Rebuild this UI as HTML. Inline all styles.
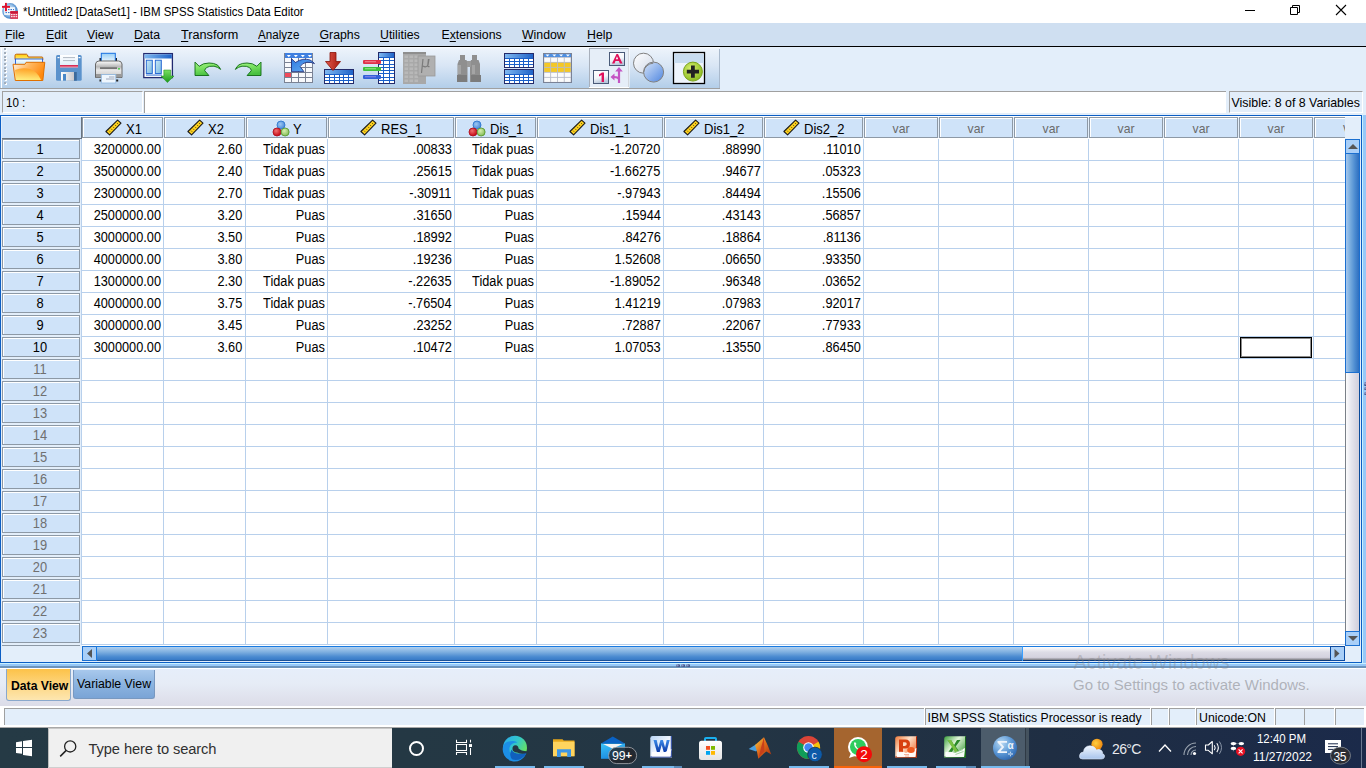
<!DOCTYPE html><html><head><meta charset="utf-8"><style>
html,body{margin:0;padding:0;width:1366px;height:768px;overflow:hidden;background:#fff;font-family:"Liberation Sans", sans-serif;position:relative}
u{text-decoration:underline;text-underline-offset:2px}
</style></head><body>
<div style="position:absolute;left:0px;top:0px;width:1366px;height:23px;background:#fff"></div>
<svg style="position:absolute;left:0;top:0" width="22" height="22" viewBox="0 0 22 22">
<defs><radialGradient id="appc" cx="0.45" cy="0.45" r="0.55"><stop offset="0" stop-color="#e8f4fc"/><stop offset="0.6" stop-color="#9cc4ea"/><stop offset="1" stop-color="#3a7cc4"/></radialGradient></defs>
<circle cx="10" cy="10.9" r="7.8" fill="url(#appc)"/>
<rect x="4.2" y="7.2" width="10.7" height="7.7" fill="#f4f8fc"/>
<path d="M5.5 9.6h8.5M5.5 12.6h8.5" stroke="#2a6ac8" stroke-width="1" stroke-dasharray="1.5 1"/>
<rect x="2" y="5.9" width="8" height="1.9" fill="#e0102a"/><rect x="5" y="2.9" width="1.9" height="8.3" fill="#e0102a"/>
<rect x="10.3" y="11.2" width="7.7" height="7.7" fill="#d83050"/><rect x="10.3" y="11.2" width="7.7" height="1.8" fill="#c81838"/>
<path d="M11 14.6h6.3M11 16.6h6.3" stroke="#fbe0e6" stroke-width="1.1" stroke-dasharray="1.6 0.7"/>
</svg>
<div style="position:absolute;left:23.2px;top:4.779999999999999px;font-size:12.4px;line-height:normal;color:#000;font-weight:normal;white-space:pre;transform:scaleX(0.924);transform-origin:0 0;">*Untitled2 [DataSet1] - IBM SPSS Statistics Data Editor</div>
<div style="position:absolute;left:1245px;top:10px;width:10px;height:1px;background:#000"></div>
<svg style="position:absolute;left:1289px;top:4px" width="12" height="12" viewBox="0 0 12 12">
<path d="M1.5 3.5h7v7h-7z" fill="none" stroke="#000" stroke-width="1"/>
<path d="M3.5 3.5v-2h7v7h-2" fill="none" stroke="#000" stroke-width="1"/></svg>
<svg style="position:absolute;left:1335px;top:4px" width="12" height="12" viewBox="0 0 12 12">
<path d="M1 1L11 11M11 1L1 11" stroke="#000" stroke-width="1.1"/></svg>
<div style="position:absolute;left:0px;top:23px;width:1366px;height:23px;background:#cfdff1"></div>
<div style="position:absolute;left:0px;top:46px;width:1366px;height:1px;background:#000"></div>
<div style="position:absolute;left:5px;top:27.869999999999997px;font-size:12.3px;line-height:normal;color:#000;font-weight:normal;white-space:pre;"><u>F</u>ile</div>
<div style="position:absolute;left:46px;top:27.869999999999997px;font-size:12.3px;line-height:normal;color:#000;font-weight:normal;white-space:pre;"><u>E</u>dit</div>
<div style="position:absolute;left:87px;top:27.869999999999997px;font-size:12.3px;line-height:normal;color:#000;font-weight:normal;white-space:pre;"><u>V</u>iew</div>
<div style="position:absolute;left:134px;top:27.869999999999997px;font-size:12.3px;line-height:normal;color:#000;font-weight:normal;white-space:pre;"><u>D</u>ata</div>
<div style="position:absolute;left:181px;top:27.869999999999997px;font-size:12.3px;line-height:normal;color:#000;font-weight:normal;white-space:pre;transform:scaleX(1.03);transform-origin:0 0;"><u>T</u>ransform</div>
<div style="position:absolute;left:258px;top:27.869999999999997px;font-size:12.3px;line-height:normal;color:#000;font-weight:normal;white-space:pre;transform:scaleX(0.945);transform-origin:0 0;"><u>A</u>nalyze</div>
<div style="position:absolute;left:319.5px;top:27.869999999999997px;font-size:12.3px;line-height:normal;color:#000;font-weight:normal;white-space:pre;"><u>G</u>raphs</div>
<div style="position:absolute;left:380px;top:27.869999999999997px;font-size:12.3px;line-height:normal;color:#000;font-weight:normal;white-space:pre;"><u>U</u>tilities</div>
<div style="position:absolute;left:441.5px;top:27.869999999999997px;font-size:12.3px;line-height:normal;color:#000;font-weight:normal;white-space:pre;">E<u>x</u>tensions</div>
<div style="position:absolute;left:522px;top:27.869999999999997px;font-size:12.3px;line-height:normal;color:#000;font-weight:normal;white-space:pre;"><u>W</u>indow</div>
<div style="position:absolute;left:587px;top:27.869999999999997px;font-size:12.3px;line-height:normal;color:#000;font-weight:normal;white-space:pre;"><u>H</u>elp</div>
<div style="position:absolute;left:0px;top:47px;width:1366px;height:42px;background:#e3eefa"></div>
<div style="position:absolute;left:0px;top:47px;width:720px;height:41px;background:linear-gradient(#fbfdff 0px,#ecf3fb 2px,#d9e6f5 45%,#b3cee9 100%)"></div>
<div style="position:absolute;left:719px;top:49px;width:1px;height:39px;background:#a9b9cc"></div>
<div style="position:absolute;left:0px;top:88px;width:720px;height:1px;background:#a0a0a0"></div>
<div style="position:absolute;left:1px;top:48px;width:1px;height:40px;background:#fff"></div>
<div style="position:absolute;left:5px;top:49px;width:2px;height:2px;background:#fff"></div>
<div style="position:absolute;left:4px;top:48px;width:2px;height:2px;background:#a2adba"></div>
<div style="position:absolute;left:5px;top:53px;width:2px;height:2px;background:#fff"></div>
<div style="position:absolute;left:4px;top:52px;width:2px;height:2px;background:#a2adba"></div>
<div style="position:absolute;left:5px;top:57px;width:2px;height:2px;background:#fff"></div>
<div style="position:absolute;left:4px;top:56px;width:2px;height:2px;background:#a2adba"></div>
<div style="position:absolute;left:5px;top:60px;width:2px;height:2px;background:#fff"></div>
<div style="position:absolute;left:4px;top:59px;width:2px;height:2px;background:#a2adba"></div>
<div style="position:absolute;left:5px;top:64px;width:2px;height:2px;background:#fff"></div>
<div style="position:absolute;left:4px;top:63px;width:2px;height:2px;background:#a2adba"></div>
<div style="position:absolute;left:5px;top:68px;width:2px;height:2px;background:#fff"></div>
<div style="position:absolute;left:4px;top:67px;width:2px;height:2px;background:#a2adba"></div>
<div style="position:absolute;left:5px;top:71px;width:2px;height:2px;background:#fff"></div>
<div style="position:absolute;left:4px;top:70px;width:2px;height:2px;background:#a2adba"></div>
<div style="position:absolute;left:5px;top:75px;width:2px;height:2px;background:#fff"></div>
<div style="position:absolute;left:4px;top:74px;width:2px;height:2px;background:#a2adba"></div>
<div style="position:absolute;left:5px;top:79px;width:2px;height:2px;background:#fff"></div>
<div style="position:absolute;left:4px;top:78px;width:2px;height:2px;background:#a2adba"></div>
<div style="position:absolute;left:5px;top:83px;width:2px;height:2px;background:#fff"></div>
<div style="position:absolute;left:4px;top:82px;width:2px;height:2px;background:#a2adba"></div>
<svg style="position:absolute;left:0;top:0" width="720" height="90" viewBox="0 0 720 90"><defs>
<linearGradient id="fold" x1="0" y1="0" x2="0" y2="1"><stop offset="0" stop-color="#ffd25a"/><stop offset="0.5" stop-color="#ffb13a"/><stop offset="1" stop-color="#ffe7a0"/></linearGradient>
<linearGradient id="hdrg" x1="0" y1="0" x2="1" y2="0"><stop offset="0" stop-color="#7fb8f0"/><stop offset="1" stop-color="#1f63c8"/></linearGradient>
<linearGradient id="grn" x1="0" y1="0" x2="0.3" y2="1"><stop offset="0" stop-color="#a8f88a"/><stop offset="0.5" stop-color="#78e060"/><stop offset="1" stop-color="#48c040"/></linearGradient>
<linearGradient id="prn" x1="0" y1="0" x2="0" y2="1"><stop offset="0" stop-color="#ffffff"/><stop offset="0.35" stop-color="#b8b8b8"/><stop offset="0.55" stop-color="#e8e8e8"/><stop offset="1" stop-color="#c8c8c8"/></linearGradient>
<linearGradient id="redar" x1="0" y1="0" x2="1" y2="0"><stop offset="0" stop-color="#e2574a"/><stop offset="1" stop-color="#a51a10"/></linearGradient>
<linearGradient id="circ2" x1="0" y1="0" x2="1" y2="1"><stop offset="0" stop-color="#d6e4f8"/><stop offset="1" stop-color="#4f86e0"/></linearGradient>
<linearGradient id="circ1" x1="0" y1="0" x2="1" y2="1"><stop offset="0" stop-color="#ffffff"/><stop offset="1" stop-color="#cfd8e8"/></linearGradient>
<linearGradient id="lblg" x1="0" y1="0" x2="0.3" y2="1"><stop offset="0" stop-color="#ffffff"/><stop offset="0.6" stop-color="#f4f6fa"/><stop offset="1" stop-color="#b8c8dc"/></linearGradient>
<linearGradient id="arrb" x1="0" y1="0" x2="1" y2="1"><stop offset="0" stop-color="#2f78e0"/><stop offset="1" stop-color="#6ab4f4"/></linearGradient>
<linearGradient id="foldt" x1="0" y1="0" x2="0" y2="1"><stop offset="0" stop-color="#ffd000"/><stop offset="1" stop-color="#ffe890"/></linearGradient>
<linearGradient id="paper" x1="0" y1="0" x2="0" y2="1"><stop offset="0" stop-color="#ffffff"/><stop offset="1" stop-color="#bfe6f8"/></linearGradient>
<linearGradient id="foldf" x1="0" y1="0" x2="1" y2="0.4"><stop offset="0" stop-color="#fff4e8"/><stop offset="0.5" stop-color="#ffb860"/><stop offset="1" stop-color="#ff8a10"/></linearGradient>
<linearGradient id="foldh" x1="0" y1="0" x2="0" y2="1"><stop offset="0" stop-color="#ff9a18"/><stop offset="1" stop-color="#fff888"/></linearGradient>
<linearGradient id="flab" x1="0" y1="0" x2="0" y2="1"><stop offset="0" stop-color="#ffffff"/><stop offset="1" stop-color="#e0eefa"/></linearGradient>
<linearGradient id="fred" x1="0" y1="0" x2="0" y2="1"><stop offset="0" stop-color="#d01040"/><stop offset="1" stop-color="#f8a0b0"/></linearGradient>
<linearGradient id="fshut" x1="0" y1="0" x2="1" y2="0"><stop offset="0" stop-color="#ffffff"/><stop offset="1" stop-color="#c8c8cc"/></linearGradient>
<linearGradient id="prpap" x1="0" y1="0" x2="0" y2="1"><stop offset="0" stop-color="#98cff6"/><stop offset="1" stop-color="#f4faff"/></linearGradient>
<linearGradient id="colg" x1="0" y1="0" x2="1" y2="1"><stop offset="0" stop-color="#c8e8f8"/><stop offset="1" stop-color="#7ab8e0"/></linearGradient>
<linearGradient id="grn2" x1="0" y1="0" x2="0" y2="1"><stop offset="0" stop-color="#78e060"/><stop offset="1" stop-color="#1a9a1a"/></linearGradient>
<radialGradient id="gball" cx="0.4" cy="0.35" r="0.7"><stop offset="0" stop-color="#d8f070"/><stop offset="1" stop-color="#86b81c"/></radialGradient>
</defs><path d="M15 59.5 V55.5 Q15 54.2 16.5 54.2 H26.5 Q27.5 54.2 28.2 57 H42 Q42.8 57 42.8 58 V60z" fill="url(#foldt)" stroke="#c0600a" stroke-width="1"/><rect x="15.5" y="59" width="27" height="6" fill="url(#paper)" stroke="#1a5ae0" stroke-width="0.9"/><path d="M13 64.3 H24.9 L26.1 62.3 H44.8 L42.8 80.5 H15.3 Z" fill="url(#foldf)" stroke="#e07000" stroke-width="1" stroke-linejoin="round"/><path d="M16 80 L15 70 Q22 67 30 69 Q38 72 41 80z" fill="url(#foldh)" opacity="0.85"/><path d="M57.5 55 H80.2 Q81.7 55 81.7 56.5 V79.2 Q81.7 80.7 80.2 80.7 H57.5 Q56 80.7 56 79.2 V56.5 Q56 55 57.5 55z" fill="#5b92cc"/><rect x="57.5" y="57" width="2" height="1.2" fill="#fff"/><rect x="78.5" y="57" width="2" height="1.2" fill="#fff"/><rect x="60" y="55" width="18" height="10" fill="url(#flab)"/><rect x="60" y="65" width="18" height="2.6" fill="url(#fred)"/><path d="M63 57.6 h12 M63 60.6 h12" stroke="#a8b0bc" stroke-width="0.9"/><rect x="61" y="72" width="13" height="8.7" fill="url(#fshut)"/><rect x="74" y="72" width="2.8" height="8.7" fill="#3c6a9c"/><rect x="63" y="74" width="3" height="6.7" fill="#4a88c8"/><rect x="99.5" y="58" width="2" height="3" fill="#222"/><rect x="115" y="58" width="2" height="3" fill="#222"/><rect x="101.3" y="53.3" width="14" height="9.5" fill="url(#prpap)" stroke="#1a70e0" stroke-width="1"/><path d="M95.5 64 Q96 61 99 61 H118.5 Q121.5 61 122 64 V77.5 H95.5z" fill="url(#prn)" stroke="#5a5a5a" stroke-width="0.9"/><rect x="100" y="67.3" width="17" height="1.6" fill="#6a6a6a"/><rect x="118" y="68.2" width="2" height="1.3" fill="#3ccc3c"/><rect x="96" y="74" width="25.5" height="3.4" fill="#9a9a9a"/><rect x="99.5" y="79.5" width="2.2" height="2" fill="#222"/><rect x="116" y="79.5" width="2.2" height="2" fill="#222"/><rect x="101.3" y="74.5" width="14.5" height="8.5" fill="#eef6fd" stroke="#90b8e0" stroke-width="0.8"/><path d="M109 77 h5.5 M106 79 h8.5" stroke="#8a96a8" stroke-width="0.8"/><rect x="143.8" y="53.6" width="28.6" height="24" fill="#fff" stroke="#222a70" stroke-width="1.3"/><rect x="144.5" y="54.3" width="27.3" height="4.2" fill="url(#hdrg)"/><rect x="146.3" y="60.2" width="6" height="13.3" fill="url(#colg)" stroke="#1a5fd0" stroke-width="0.9"/><rect x="155.3" y="60.2" width="6" height="13.3" fill="url(#colg)" stroke="#1a5fd0" stroke-width="0.9"/><rect x="146" y="74.6" width="16" height="0.9" fill="#1a5fd0"/><path d="M163.8 70 H170.7 V76 H174 L167.4 82.6 L161 76 H163.8z" fill="url(#grn2)" stroke="#1a8a1a" stroke-width="0.5"/><path d="M195 62.1 L199.2 66.3 Q203 63 209 63 Q214 63 217 64.8 Q219.5 66.5 220.6 69.4 Q218 67 214 66.2 Q209 65.8 206.5 67.6 Q205 69 204.7 70.7 L208.9 75.5 L195 75.5 Z" fill="url(#grn)" stroke="#0e6a12" stroke-width="0.9" stroke-linejoin="miter"/><path d="M 261 62.1 L 256.8 66.3 Q 253 63 247 63 Q 242 63 239 64.8 Q 236.5 66.5 235.4 69.4 Q 238 67 242 66.2 Q 247 65.8 249.5 67.6 Q 251 69 251.3 70.7 L 247.1 75.5 L 261 75.5 Z" fill="url(#grn)" stroke="#0e6a12" stroke-width="0.9" stroke-linejoin="miter"/><g shape-rendering="crispEdges"><rect x="284" y="53" width="29" height="30" fill="#7a8294"/><rect x="285" y="53" width="27" height="5" fill="#3f7fe0"/><rect x="285" y="58" width="6" height="4" fill="#f8f9fc"/><rect x="292" y="58" width="6" height="4" fill="#f8f9fc"/><rect x="299" y="58" width="6" height="4" fill="#f8f9fc"/><rect x="306" y="58" width="6" height="4" fill="#f8f9fc"/><rect x="285" y="63" width="6" height="4" fill="#f8f9fc"/><rect x="292" y="63" width="6" height="4" fill="#f8f9fc"/><rect x="299" y="63" width="6" height="4" fill="#f8f9fc"/><rect x="306" y="63" width="6" height="4" fill="#f8f9fc"/><rect x="285" y="68" width="6" height="4" fill="#f8f9fc"/><rect x="292" y="68" width="6" height="4" fill="#f8f9fc"/><rect x="299" y="68" width="6" height="4" fill="#f8f9fc"/><rect x="306" y="68" width="6" height="4" fill="#f8f9fc"/><rect x="285" y="73" width="6" height="4" fill="#f04a5a"/><rect x="292" y="73" width="6" height="4" fill="#f8f9fc"/><rect x="299" y="73" width="6" height="4" fill="#f8f9fc"/><rect x="306" y="73" width="6" height="4" fill="#f8f9fc"/><rect x="285" y="78" width="6" height="4" fill="#f8f9fc"/><rect x="292" y="78" width="6" height="4" fill="#f8f9fc"/><rect x="299" y="78" width="6" height="4" fill="#f8f9fc"/><rect x="306" y="78" width="6" height="4" fill="#f8f9fc"/></g><path d="M286.8 55 h4 l-2 2.2z" fill="#fff"/><path d="M293.8 55 h4 l-2 2.2z" fill="#fff"/><path d="M300.8 55 h4 l-2 2.2z" fill="#fff"/><path d="M307.8 55 h4 l-2 2.2z" fill="#fff"/><path d="M291.5 58.7 L295.5 62.4 Q303 57.5 310 60 Q313 61.5 314.5 63.6 Q311 62 307 62.2 Q302 63 300.2 66.6 L303.9 71.6 L291.5 71.6 Z" fill="url(#arrb)" stroke="#1a2a7a" stroke-width="0.8"/><g shape-rendering="crispEdges"><rect x="324" y="69" width="30" height="15" fill="#232a6a"/><rect x="325" y="70" width="28" height="13" fill="#1a5fc8"/><rect x="325" y="70" width="28" height="4" fill="url(#hdrg)"/><rect x="325.00" y="75.00" width="3.83" height="2.00" fill="#fff"/><rect x="329.83" y="75.00" width="3.83" height="2.00" fill="#fff"/><rect x="334.67" y="75.00" width="3.83" height="2.00" fill="#fff"/><rect x="339.50" y="75.00" width="3.83" height="2.00" fill="#fff"/><rect x="344.33" y="75.00" width="3.83" height="2.00" fill="#fff"/><rect x="349.17" y="75.00" width="3.83" height="2.00" fill="#fff"/><rect x="325.00" y="78.00" width="3.83" height="2.00" fill="#fff"/><rect x="329.83" y="78.00" width="3.83" height="2.00" fill="#fff"/><rect x="334.67" y="78.00" width="3.83" height="2.00" fill="#fff"/><rect x="339.50" y="78.00" width="3.83" height="2.00" fill="#fff"/><rect x="344.33" y="78.00" width="3.83" height="2.00" fill="#fff"/><rect x="349.17" y="78.00" width="3.83" height="2.00" fill="#fff"/><rect x="325.00" y="81.00" width="3.83" height="2.00" fill="#fff"/><rect x="329.83" y="81.00" width="3.83" height="2.00" fill="#fff"/><rect x="334.67" y="81.00" width="3.83" height="2.00" fill="#fff"/><rect x="339.50" y="81.00" width="3.83" height="2.00" fill="#fff"/><rect x="344.33" y="81.00" width="3.83" height="2.00" fill="#fff"/><rect x="349.17" y="81.00" width="3.83" height="2.00" fill="#fff"/></g><path d="M330 52.5 h6 v9 h4.5 l-7.5 9 l-7.5-9 h4.5z" fill="url(#redar)" stroke="#8a1208" stroke-width="0.8"/><g shape-rendering="crispEdges"><rect x="378" y="52" width="17" height="32" fill="#232a6a"/><rect x="379" y="53" width="15" height="30" fill="#1a5fc8"/><rect x="379" y="53" width="15" height="4" fill="url(#hdrg)"/><rect x="379.00" y="58.00" width="4.33" height="2.25" fill="#fff"/><rect x="384.33" y="58.00" width="4.33" height="2.25" fill="#fff"/><rect x="389.67" y="58.00" width="4.33" height="2.25" fill="#fff"/><rect x="379.00" y="61.25" width="4.33" height="2.25" fill="#fff"/><rect x="384.33" y="61.25" width="4.33" height="2.25" fill="#fff"/><rect x="389.67" y="61.25" width="4.33" height="2.25" fill="#fff"/><rect x="379.00" y="64.50" width="4.33" height="2.25" fill="#fff"/><rect x="384.33" y="64.50" width="4.33" height="2.25" fill="#fff"/><rect x="389.67" y="64.50" width="4.33" height="2.25" fill="#fff"/><rect x="379.00" y="67.75" width="4.33" height="2.25" fill="#fff"/><rect x="384.33" y="67.75" width="4.33" height="2.25" fill="#fff"/><rect x="389.67" y="67.75" width="4.33" height="2.25" fill="#fff"/><rect x="379.00" y="71.00" width="4.33" height="2.25" fill="#fff"/><rect x="384.33" y="71.00" width="4.33" height="2.25" fill="#fff"/><rect x="389.67" y="71.00" width="4.33" height="2.25" fill="#fff"/><rect x="379.00" y="74.25" width="4.33" height="2.25" fill="#fff"/><rect x="384.33" y="74.25" width="4.33" height="2.25" fill="#fff"/><rect x="389.67" y="74.25" width="4.33" height="2.25" fill="#fff"/><rect x="379.00" y="77.50" width="4.33" height="2.25" fill="#fff"/><rect x="384.33" y="77.50" width="4.33" height="2.25" fill="#fff"/><rect x="389.67" y="77.50" width="4.33" height="2.25" fill="#fff"/><rect x="379.00" y="80.75" width="4.33" height="2.25" fill="#fff"/><rect x="384.33" y="80.75" width="4.33" height="2.25" fill="#fff"/><rect x="389.67" y="80.75" width="4.33" height="2.25" fill="#fff"/></g><rect x="363" y="60" width="18" height="4" rx="1" fill="#e0304a"/><rect x="365" y="61.4" width="11" height="0.8" fill="#f8a0a8"/><rect x="363" y="67" width="18" height="4" rx="1" fill="#3cc03c"/><rect x="365" y="68.4" width="11" height="0.8" fill="#b0f0a0"/><rect x="363" y="75" width="18" height="4" rx="1" fill="#3060d8"/><rect x="365" y="76.4" width="11" height="0.8" fill="#a090f0"/><rect x="403" y="52" width="23" height="32" fill="#a8a8a8"/><rect x="403" y="52" width="23" height="2" fill="#8e8e8e"/><rect x="404.5" y="55.5" width="3.6" height="2.6" fill="#b8b8b8"/><rect x="409.5" y="55.5" width="3.6" height="2.6" fill="#b8b8b8"/><rect x="414.5" y="55.5" width="3.6" height="2.6" fill="#b8b8b8"/><rect x="404.5" y="59.5" width="3.6" height="2.6" fill="#b8b8b8"/><rect x="409.5" y="59.5" width="3.6" height="2.6" fill="#b8b8b8"/><rect x="414.5" y="59.5" width="3.6" height="2.6" fill="#b8b8b8"/><rect x="404.5" y="63.5" width="3.6" height="2.6" fill="#b8b8b8"/><rect x="409.5" y="63.5" width="3.6" height="2.6" fill="#b8b8b8"/><rect x="414.5" y="63.5" width="3.6" height="2.6" fill="#b8b8b8"/><rect x="404.5" y="67.5" width="3.6" height="2.6" fill="#b8b8b8"/><rect x="409.5" y="67.5" width="3.6" height="2.6" fill="#b8b8b8"/><rect x="414.5" y="67.5" width="3.6" height="2.6" fill="#b8b8b8"/><rect x="404.5" y="71.5" width="3.6" height="2.6" fill="#b8b8b8"/><rect x="409.5" y="71.5" width="3.6" height="2.6" fill="#b8b8b8"/><rect x="414.5" y="71.5" width="3.6" height="2.6" fill="#b8b8b8"/><rect x="404.5" y="75.5" width="3.6" height="2.6" fill="#b8b8b8"/><rect x="409.5" y="75.5" width="3.6" height="2.6" fill="#b8b8b8"/><rect x="414.5" y="75.5" width="3.6" height="2.6" fill="#b8b8b8"/><rect x="404.5" y="79.5" width="3.6" height="2.6" fill="#b8b8b8"/><rect x="409.5" y="79.5" width="3.6" height="2.6" fill="#b8b8b8"/><rect x="414.5" y="79.5" width="3.6" height="2.6" fill="#b8b8b8"/><rect x="418" y="56" width="17" height="20" fill="#b0b0b0" stroke="#9a9a9a" stroke-width="0.8"/><path d="M423 59 l-1.5 14 M423 66 q3 2 5 -1 l1-6 M428.5 59 l-0.8 7 q0.5 1 1.8 0.5" fill="none" stroke="#7a7a7a" stroke-width="1.2"/><path d="M460 55 h5 v5 h1.5 l1 3 v19 h-10 v-18 l1.5-4 h1z" fill="#8f8f8f"/><path d="M472 55 h5 v5 h1.5 l1.5 4 v18 h-10 v-19 l1-3 h1z" fill="#8f8f8f"/><rect x="467" y="61" width="4" height="6" fill="#9a9a9a"/><rect x="457" y="75" width="10" height="7" fill="#7c7c7c"/><rect x="471" y="75" width="10" height="7" fill="#7c7c7c"/><rect x="458" y="65" width="3" height="9" fill="#a4a4a4"/><rect x="472" y="65" width="3" height="9" fill="#a4a4a4"/><g shape-rendering="crispEdges"><rect x="504" y="53" width="30" height="15" fill="#232a6a"/><rect x="505" y="54" width="28" height="13" fill="#1a5fc8"/><rect x="505" y="54" width="28" height="4" fill="url(#hdrg)"/><rect x="505.00" y="59.00" width="3.83" height="2.00" fill="#fff"/><rect x="509.83" y="59.00" width="3.83" height="2.00" fill="#fff"/><rect x="514.67" y="59.00" width="3.83" height="2.00" fill="#fff"/><rect x="519.50" y="59.00" width="3.83" height="2.00" fill="#fff"/><rect x="524.33" y="59.00" width="3.83" height="2.00" fill="#fff"/><rect x="529.17" y="59.00" width="3.83" height="2.00" fill="#fff"/><rect x="505.00" y="62.00" width="3.83" height="2.00" fill="#fff"/><rect x="509.83" y="62.00" width="3.83" height="2.00" fill="#fff"/><rect x="514.67" y="62.00" width="3.83" height="2.00" fill="#fff"/><rect x="519.50" y="62.00" width="3.83" height="2.00" fill="#fff"/><rect x="524.33" y="62.00" width="3.83" height="2.00" fill="#fff"/><rect x="529.17" y="62.00" width="3.83" height="2.00" fill="#fff"/><rect x="505.00" y="65.00" width="3.83" height="2.00" fill="#fff"/><rect x="509.83" y="65.00" width="3.83" height="2.00" fill="#fff"/><rect x="514.67" y="65.00" width="3.83" height="2.00" fill="#fff"/><rect x="519.50" y="65.00" width="3.83" height="2.00" fill="#fff"/><rect x="524.33" y="65.00" width="3.83" height="2.00" fill="#fff"/><rect x="529.17" y="65.00" width="3.83" height="2.00" fill="#fff"/></g><g shape-rendering="crispEdges"><rect x="504" y="69" width="30" height="15" fill="#232a6a"/><rect x="505" y="70" width="28" height="13" fill="#1a5fc8"/><rect x="505" y="70" width="28" height="4" fill="url(#hdrg)"/><rect x="505.00" y="75.00" width="3.83" height="2.00" fill="#fff"/><rect x="509.83" y="75.00" width="3.83" height="2.00" fill="#fff"/><rect x="514.67" y="75.00" width="3.83" height="2.00" fill="#fff"/><rect x="519.50" y="75.00" width="3.83" height="2.00" fill="#fff"/><rect x="524.33" y="75.00" width="3.83" height="2.00" fill="#fff"/><rect x="529.17" y="75.00" width="3.83" height="2.00" fill="#fff"/><rect x="505.00" y="78.00" width="3.83" height="2.00" fill="#fff"/><rect x="509.83" y="78.00" width="3.83" height="2.00" fill="#fff"/><rect x="514.67" y="78.00" width="3.83" height="2.00" fill="#fff"/><rect x="519.50" y="78.00" width="3.83" height="2.00" fill="#fff"/><rect x="524.33" y="78.00" width="3.83" height="2.00" fill="#fff"/><rect x="529.17" y="78.00" width="3.83" height="2.00" fill="#fff"/><rect x="505.00" y="81.00" width="3.83" height="2.00" fill="#fff"/><rect x="509.83" y="81.00" width="3.83" height="2.00" fill="#fff"/><rect x="514.67" y="81.00" width="3.83" height="2.00" fill="#fff"/><rect x="519.50" y="81.00" width="3.83" height="2.00" fill="#fff"/><rect x="524.33" y="81.00" width="3.83" height="2.00" fill="#fff"/><rect x="529.17" y="81.00" width="3.83" height="2.00" fill="#fff"/></g><rect x="543.5" y="53.5" width="28" height="29" fill="#b8bcc8" stroke="#7a8296" stroke-width="1"/><rect x="544" y="54" width="27" height="3" fill="#4f8fe0"/><rect x="544.30" y="57.80" width="5.9" height="4.1" fill="#fbfbfb"/><rect x="551.10" y="57.80" width="5.9" height="4.1" fill="#fbfbfb"/><rect x="557.90" y="57.80" width="5.9" height="4.1" fill="#fbfbfb"/><rect x="564.70" y="57.80" width="5.9" height="4.1" fill="#fbfbfb"/><rect x="544.30" y="62.80" width="5.9" height="4.1" fill="#f5c824"/><rect x="551.10" y="62.80" width="5.9" height="4.1" fill="#f5c824"/><rect x="557.90" y="62.80" width="5.9" height="4.1" fill="#f5c824"/><rect x="564.70" y="62.80" width="5.9" height="4.1" fill="#f5c824"/><rect x="544.30" y="67.80" width="5.9" height="4.1" fill="#f5c824"/><rect x="551.10" y="67.80" width="5.9" height="4.1" fill="#f5c824"/><rect x="557.90" y="67.80" width="5.9" height="4.1" fill="#f5c824"/><rect x="564.70" y="67.80" width="5.9" height="4.1" fill="#f5c824"/><rect x="544.30" y="72.80" width="5.9" height="4.1" fill="#fbfbfb"/><rect x="551.10" y="72.80" width="5.9" height="4.1" fill="#fbfbfb"/><rect x="557.90" y="72.80" width="5.9" height="4.1" fill="#fbfbfb"/><rect x="564.70" y="72.80" width="5.9" height="4.1" fill="#fbfbfb"/><rect x="544.30" y="77.80" width="5.9" height="4.1" fill="#fbfbfb"/><rect x="551.10" y="77.80" width="5.9" height="4.1" fill="#fbfbfb"/><rect x="557.90" y="77.80" width="5.9" height="4.1" fill="#fbfbfb"/><rect x="564.70" y="77.80" width="5.9" height="4.1" fill="#fbfbfb"/><path d="M545.50 54.6 h4 l-2 2z" fill="#fff"/><path d="M552.30 54.6 h4 l-2 2z" fill="#fff"/><path d="M559.10 54.6 h4 l-2 2z" fill="#fff"/><path d="M565.90 54.6 h4 l-2 2z" fill="#fff"/><rect x="589.5" y="48.5" width="39" height="39" fill="#e6eef8" stroke="#a8b0bc" stroke-width="1"/><path d="M629 48.5 v39 h-40" fill="none" stroke="#fff" stroke-width="1"/><rect x="609.5" y="52.5" width="15" height="13" fill="url(#lblg)" stroke="#4a5a78" stroke-width="1"/><path d="M612 63.5 l4.5-9.5 h1.5 l4.5 9.5 h-2.6 l-1-2.4 h-3.4 l-1 2.4z M615.8 59.3 h2.4 l-1.2-3z" fill="#e0105a" fill-rule="evenodd"/><rect x="593.5" y="70.5" width="15" height="13" fill="url(#lblg)" stroke="#4a5a78" stroke-width="1"/><path d="M599 74.5 l3-2 h2 v9.5 h-2.4 v-7 l-2.6 1.4z" fill="#e0105a"/><path d="M619 83 V71 M619 79.5 Q618.5 77 614 77" fill="none" stroke="#c455c4" stroke-width="2.2"/><path d="M615.2 71.5 L619 67 L622.8 71.5z M614.5 73.5 L610.5 77 L614.5 80.5z" fill="#c455c4"/><circle cx="643.5" cy="63.2" r="10" fill="url(#circ1)" stroke="#808080" stroke-width="1"/><circle cx="653.6" cy="72.1" r="10" fill="url(#circ2)" stroke="#808080" stroke-width="1"/><path d="M643.7 72.1 a10 10 0 0 1 9.6-8.9" fill="none" stroke="#808080" stroke-width="1"/><rect x="673.5" y="52.5" width="31" height="31" fill="#eef4fc" stroke="#000" stroke-width="1.3"/><rect x="674.2" y="54" width="29.6" height="9" fill="#c8dcf0"/><circle cx="692.9" cy="71.6" r="9.5" fill="url(#gball)" stroke="#7aa21a" stroke-width="1"/><path d="M691 65.5 h3.8 v4.2 h4.2 v3.8 h-4.2 v4.2 h-3.8 v-4.2 h-4.2 v-3.8 h4.2z" fill="#222"/></svg>
<div style="position:absolute;left:0px;top:89px;width:1366px;height:26px;background:#e3eefa"></div>
<div style="position:absolute;left:2px;top:91px;width:141px;height:22px;background:#e3eefa;border-top:1px solid #a0a0a0;border-left:1px solid #a0a0a0;border-bottom:1px solid #fff;border-right:1px solid #fff;box-sizing:border-box"></div>
<div style="position:absolute;left:5.5px;top:95.87px;font-size:12.3px;line-height:normal;color:#000;font-weight:normal;white-space:pre;transform:scaleX(0.94);transform-origin:0 0;">10 :</div>
<div style="position:absolute;left:144px;top:91px;width:1082px;height:22px;background:#fff;border-top:1px solid #a0a0a0;border-left:1px solid #a0a0a0;box-sizing:border-box"></div>
<div style="position:absolute;left:1229px;top:91px;width:134px;height:22px;background:#e3eefa;border-top:1px solid #a0a0a0;border-left:1px solid #a0a0a0;border-bottom:1px solid #fff;border-right:1px solid #fff;box-sizing:border-box"></div>
<div style="position:absolute;left:1231.5px;top:95.78px;font-size:12.4px;line-height:normal;color:#000;font-weight:normal;white-space:pre;">Visible: 8 of 8 Variables</div>
<div style="position:absolute;left:0px;top:115px;width:1362px;height:548px;background:#e3eefa;border:1px solid #0c5ec4;box-sizing:border-box"></div>
<div style="position:absolute;left:1px;top:116px;width:1360px;height:1px;background:#fff"></div>
<div style="position:absolute;left:82px;top:138px;width:1263px;height:507px;background:#fff"></div>
<div style="position:absolute;left:163px;top:139px;width:1px;height:506px;background:#b8d0ec"></div>
<div style="position:absolute;left:245px;top:139px;width:1px;height:506px;background:#b8d0ec"></div>
<div style="position:absolute;left:327px;top:139px;width:1px;height:506px;background:#b8d0ec"></div>
<div style="position:absolute;left:454px;top:139px;width:1px;height:506px;background:#b8d0ec"></div>
<div style="position:absolute;left:536px;top:139px;width:1px;height:506px;background:#b8d0ec"></div>
<div style="position:absolute;left:663px;top:139px;width:1px;height:506px;background:#b8d0ec"></div>
<div style="position:absolute;left:763px;top:139px;width:1px;height:506px;background:#b8d0ec"></div>
<div style="position:absolute;left:863px;top:139px;width:1px;height:506px;background:#b8d0ec"></div>
<div style="position:absolute;left:938px;top:139px;width:1px;height:506px;background:#b8d0ec"></div>
<div style="position:absolute;left:1013px;top:139px;width:1px;height:506px;background:#b8d0ec"></div>
<div style="position:absolute;left:1088px;top:139px;width:1px;height:506px;background:#b8d0ec"></div>
<div style="position:absolute;left:1163px;top:139px;width:1px;height:506px;background:#b8d0ec"></div>
<div style="position:absolute;left:1238px;top:139px;width:1px;height:506px;background:#b8d0ec"></div>
<div style="position:absolute;left:1313px;top:139px;width:1px;height:506px;background:#b8d0ec"></div>
<div style="position:absolute;left:82px;top:160px;width:1263px;height:1px;background:#b8d0ec"></div>
<div style="position:absolute;left:82px;top:182px;width:1263px;height:1px;background:#b8d0ec"></div>
<div style="position:absolute;left:82px;top:204px;width:1263px;height:1px;background:#b8d0ec"></div>
<div style="position:absolute;left:82px;top:226px;width:1263px;height:1px;background:#b8d0ec"></div>
<div style="position:absolute;left:82px;top:248px;width:1263px;height:1px;background:#b8d0ec"></div>
<div style="position:absolute;left:82px;top:270px;width:1263px;height:1px;background:#b8d0ec"></div>
<div style="position:absolute;left:82px;top:292px;width:1263px;height:1px;background:#b8d0ec"></div>
<div style="position:absolute;left:82px;top:314px;width:1263px;height:1px;background:#b8d0ec"></div>
<div style="position:absolute;left:82px;top:336px;width:1263px;height:1px;background:#b8d0ec"></div>
<div style="position:absolute;left:82px;top:358px;width:1263px;height:1px;background:#b8d0ec"></div>
<div style="position:absolute;left:82px;top:380px;width:1263px;height:1px;background:#b8d0ec"></div>
<div style="position:absolute;left:82px;top:402px;width:1263px;height:1px;background:#b8d0ec"></div>
<div style="position:absolute;left:82px;top:424px;width:1263px;height:1px;background:#b8d0ec"></div>
<div style="position:absolute;left:82px;top:446px;width:1263px;height:1px;background:#b8d0ec"></div>
<div style="position:absolute;left:82px;top:468px;width:1263px;height:1px;background:#b8d0ec"></div>
<div style="position:absolute;left:82px;top:490px;width:1263px;height:1px;background:#b8d0ec"></div>
<div style="position:absolute;left:82px;top:512px;width:1263px;height:1px;background:#b8d0ec"></div>
<div style="position:absolute;left:82px;top:534px;width:1263px;height:1px;background:#b8d0ec"></div>
<div style="position:absolute;left:82px;top:556px;width:1263px;height:1px;background:#b8d0ec"></div>
<div style="position:absolute;left:82px;top:578px;width:1263px;height:1px;background:#b8d0ec"></div>
<div style="position:absolute;left:82px;top:600px;width:1263px;height:1px;background:#b8d0ec"></div>
<div style="position:absolute;left:82px;top:622px;width:1263px;height:1px;background:#b8d0ec"></div>
<div style="position:absolute;left:82px;top:644px;width:1263px;height:1px;background:#b8d0ec"></div>
<div style="position:absolute;left:81px;top:139px;width:1px;height:506px;background:#b8d0ec"></div>
<div style="position:absolute;left:2px;top:117px;width:80px;height:22px;background:#cfe3f9;border-right:1px solid #6a7480;border-bottom:1px solid #6a7480;box-sizing:border-box"></div>
<div style="position:absolute;left:82px;top:117px;width:81px;height:21px;background:#cfe3f9;border:1px solid #8d99a6;box-sizing:border-box;box-shadow:inset 1px 1px 0 #fff"></div>
<div style="position:absolute;left:164px;top:117px;width:81px;height:21px;background:#cfe3f9;border:1px solid #8d99a6;box-sizing:border-box;box-shadow:inset 1px 1px 0 #fff"></div>
<div style="position:absolute;left:246px;top:117px;width:81px;height:21px;background:#cfe3f9;border:1px solid #8d99a6;box-sizing:border-box;box-shadow:inset 1px 1px 0 #fff"></div>
<div style="position:absolute;left:328px;top:117px;width:126px;height:21px;background:#cfe3f9;border:1px solid #8d99a6;box-sizing:border-box;box-shadow:inset 1px 1px 0 #fff"></div>
<div style="position:absolute;left:455px;top:117px;width:81px;height:21px;background:#cfe3f9;border:1px solid #8d99a6;box-sizing:border-box;box-shadow:inset 1px 1px 0 #fff"></div>
<div style="position:absolute;left:537px;top:117px;width:126px;height:21px;background:#cfe3f9;border:1px solid #8d99a6;box-sizing:border-box;box-shadow:inset 1px 1px 0 #fff"></div>
<div style="position:absolute;left:664px;top:117px;width:99px;height:21px;background:#cfe3f9;border:1px solid #8d99a6;box-sizing:border-box;box-shadow:inset 1px 1px 0 #fff"></div>
<div style="position:absolute;left:764px;top:117px;width:99px;height:21px;background:#cfe3f9;border:1px solid #8d99a6;box-sizing:border-box;box-shadow:inset 1px 1px 0 #fff"></div>
<div style="position:absolute;left:864px;top:117px;width:74px;height:21px;background:#cfe3f9;border:1px solid #8d99a6;box-sizing:border-box;box-shadow:inset 1px 1px 0 #fff"></div>
<div style="position:absolute;left:939px;top:117px;width:74px;height:21px;background:#cfe3f9;border:1px solid #8d99a6;box-sizing:border-box;box-shadow:inset 1px 1px 0 #fff"></div>
<div style="position:absolute;left:1014px;top:117px;width:74px;height:21px;background:#cfe3f9;border:1px solid #8d99a6;box-sizing:border-box;box-shadow:inset 1px 1px 0 #fff"></div>
<div style="position:absolute;left:1089px;top:117px;width:74px;height:21px;background:#cfe3f9;border:1px solid #8d99a6;box-sizing:border-box;box-shadow:inset 1px 1px 0 #fff"></div>
<div style="position:absolute;left:1164px;top:117px;width:74px;height:21px;background:#cfe3f9;border:1px solid #8d99a6;box-sizing:border-box;box-shadow:inset 1px 1px 0 #fff"></div>
<div style="position:absolute;left:1239px;top:117px;width:74px;height:21px;background:#cfe3f9;border:1px solid #8d99a6;box-sizing:border-box;box-shadow:inset 1px 1px 0 #fff"></div>
<div style="position:absolute;left:1314px;top:117px;width:31px;height:21px;background:#cfe3f9;border-top:1px solid #8d99a6;border-left:1px solid #8d99a6;border-bottom:1px solid #8d99a6;box-sizing:border-box;box-shadow:inset 1px 1px 0 #fff"></div>
<svg style="position:absolute;left:105px;top:119px" width="18" height="17" viewBox="0 0 18 17">
<path d="M0.9 12.5 L12.6 1.1 L16 4.2 L4.6 15.8 Z" fill="#ffd21e" stroke="#1a1a1a" stroke-width="1.1" stroke-linejoin="round"/>
<path d="M4 11.6 l1.2 1.2 M6 9.7 l1.2 1.2 M8 7.8 l1.2 1.2 M10 5.9 l1.2 1.2 M12 4 l1.2 1.2" stroke="#6a5a10" stroke-width="0.9"/>
</svg>
<div style="position:absolute;left:125.5px;top:121.33px;font-size:14px;line-height:normal;color:#000;font-weight:normal;white-space:pre;transform:scaleX(0.93);transform-origin:0 0;">X1</div>
<svg style="position:absolute;left:187px;top:119px" width="18" height="17" viewBox="0 0 18 17">
<path d="M0.9 12.5 L12.6 1.1 L16 4.2 L4.6 15.8 Z" fill="#ffd21e" stroke="#1a1a1a" stroke-width="1.1" stroke-linejoin="round"/>
<path d="M4 11.6 l1.2 1.2 M6 9.7 l1.2 1.2 M8 7.8 l1.2 1.2 M10 5.9 l1.2 1.2 M12 4 l1.2 1.2" stroke="#6a5a10" stroke-width="0.9"/>
</svg>
<div style="position:absolute;left:207.5px;top:121.33px;font-size:14px;line-height:normal;color:#000;font-weight:normal;white-space:pre;transform:scaleX(0.93);transform-origin:0 0;">X2</div>
<svg style="position:absolute;left:272px;top:120px" width="18" height="18" viewBox="0 0 18 18">
<defs><radialGradient id="bb272" cx="0.4" cy="0.4" r="0.6"><stop offset="0" stop-color="#9cc8f4"/><stop offset="1" stop-color="#4a8ad8"/></radialGradient>
<radialGradient id="br272" cx="0.4" cy="0.35" r="0.6"><stop offset="0" stop-color="#f07070"/><stop offset="1" stop-color="#c8101a"/></radialGradient>
<radialGradient id="bg272" cx="0.4" cy="0.35" r="0.6"><stop offset="0" stop-color="#d8f0b0"/><stop offset="1" stop-color="#8cc060"/></radialGradient></defs>
<circle cx="9" cy="5" r="4" fill="url(#bb272)" stroke="#2f78d0" stroke-width="0.9"/>
<circle cx="5" cy="12" r="4" fill="url(#br272)" stroke="#b01020" stroke-width="0.9"/>
<circle cx="13.1" cy="12" r="4" fill="url(#bg272)" stroke="#5a9a30" stroke-width="0.9"/>
</svg>
<div style="position:absolute;left:292.5px;top:121.33px;font-size:14px;line-height:normal;color:#000;font-weight:normal;white-space:pre;transform:scaleX(0.93);transform-origin:0 0;">Y</div>
<svg style="position:absolute;left:360px;top:119px" width="18" height="17" viewBox="0 0 18 17">
<path d="M0.9 12.5 L12.6 1.1 L16 4.2 L4.6 15.8 Z" fill="#ffd21e" stroke="#1a1a1a" stroke-width="1.1" stroke-linejoin="round"/>
<path d="M4 11.6 l1.2 1.2 M6 9.7 l1.2 1.2 M8 7.8 l1.2 1.2 M10 5.9 l1.2 1.2 M12 4 l1.2 1.2" stroke="#6a5a10" stroke-width="0.9"/>
</svg>
<div style="position:absolute;left:381px;top:121.33px;font-size:14px;line-height:normal;color:#000;font-weight:normal;white-space:pre;transform:scaleX(0.93);transform-origin:0 0;">RES_1</div>
<svg style="position:absolute;left:468px;top:120px" width="18" height="18" viewBox="0 0 18 18">
<defs><radialGradient id="bb468" cx="0.4" cy="0.4" r="0.6"><stop offset="0" stop-color="#9cc8f4"/><stop offset="1" stop-color="#4a8ad8"/></radialGradient>
<radialGradient id="br468" cx="0.4" cy="0.35" r="0.6"><stop offset="0" stop-color="#f07070"/><stop offset="1" stop-color="#c8101a"/></radialGradient>
<radialGradient id="bg468" cx="0.4" cy="0.35" r="0.6"><stop offset="0" stop-color="#d8f0b0"/><stop offset="1" stop-color="#8cc060"/></radialGradient></defs>
<circle cx="9" cy="5" r="4" fill="url(#bb468)" stroke="#2f78d0" stroke-width="0.9"/>
<circle cx="5" cy="12" r="4" fill="url(#br468)" stroke="#b01020" stroke-width="0.9"/>
<circle cx="13.1" cy="12" r="4" fill="url(#bg468)" stroke="#5a9a30" stroke-width="0.9"/>
</svg>
<div style="position:absolute;left:489.5px;top:121.33px;font-size:14px;line-height:normal;color:#000;font-weight:normal;white-space:pre;transform:scaleX(0.93);transform-origin:0 0;">Dis_1</div>
<svg style="position:absolute;left:569px;top:119px" width="18" height="17" viewBox="0 0 18 17">
<path d="M0.9 12.5 L12.6 1.1 L16 4.2 L4.6 15.8 Z" fill="#ffd21e" stroke="#1a1a1a" stroke-width="1.1" stroke-linejoin="round"/>
<path d="M4 11.6 l1.2 1.2 M6 9.7 l1.2 1.2 M8 7.8 l1.2 1.2 M10 5.9 l1.2 1.2 M12 4 l1.2 1.2" stroke="#6a5a10" stroke-width="0.9"/>
</svg>
<div style="position:absolute;left:589.5px;top:121.33px;font-size:14px;line-height:normal;color:#000;font-weight:normal;white-space:pre;transform:scaleX(0.93);transform-origin:0 0;">Dis1_1</div>
<svg style="position:absolute;left:683px;top:119px" width="18" height="17" viewBox="0 0 18 17">
<path d="M0.9 12.5 L12.6 1.1 L16 4.2 L4.6 15.8 Z" fill="#ffd21e" stroke="#1a1a1a" stroke-width="1.1" stroke-linejoin="round"/>
<path d="M4 11.6 l1.2 1.2 M6 9.7 l1.2 1.2 M8 7.8 l1.2 1.2 M10 5.9 l1.2 1.2 M12 4 l1.2 1.2" stroke="#6a5a10" stroke-width="0.9"/>
</svg>
<div style="position:absolute;left:703.5px;top:121.33px;font-size:14px;line-height:normal;color:#000;font-weight:normal;white-space:pre;transform:scaleX(0.93);transform-origin:0 0;">Dis1_2</div>
<svg style="position:absolute;left:783px;top:119px" width="18" height="17" viewBox="0 0 18 17">
<path d="M0.9 12.5 L12.6 1.1 L16 4.2 L4.6 15.8 Z" fill="#ffd21e" stroke="#1a1a1a" stroke-width="1.1" stroke-linejoin="round"/>
<path d="M4 11.6 l1.2 1.2 M6 9.7 l1.2 1.2 M8 7.8 l1.2 1.2 M10 5.9 l1.2 1.2 M12 4 l1.2 1.2" stroke="#6a5a10" stroke-width="0.9"/>
</svg>
<div style="position:absolute;left:803.5px;top:121.33px;font-size:14px;line-height:normal;color:#000;font-weight:normal;white-space:pre;transform:scaleX(0.93);transform-origin:0 0;">Dis2_2</div>
<div style="position:absolute;left:701.0px;width:400px;top:121.96000000000001px;font-size:12.2px;line-height:normal;color:#6a6a6a;font-weight:normal;white-space:pre;text-align:center;">var</div>
<div style="position:absolute;left:776.0px;width:400px;top:121.96000000000001px;font-size:12.2px;line-height:normal;color:#6a6a6a;font-weight:normal;white-space:pre;text-align:center;">var</div>
<div style="position:absolute;left:851.0px;width:400px;top:121.96000000000001px;font-size:12.2px;line-height:normal;color:#6a6a6a;font-weight:normal;white-space:pre;text-align:center;">var</div>
<div style="position:absolute;left:926.0px;width:400px;top:121.96000000000001px;font-size:12.2px;line-height:normal;color:#6a6a6a;font-weight:normal;white-space:pre;text-align:center;">var</div>
<div style="position:absolute;left:1001.0px;width:400px;top:121.96000000000001px;font-size:12.2px;line-height:normal;color:#6a6a6a;font-weight:normal;white-space:pre;text-align:center;">var</div>
<div style="position:absolute;left:1076.0px;width:400px;top:121.96000000000001px;font-size:12.2px;line-height:normal;color:#6a6a6a;font-weight:normal;white-space:pre;text-align:center;">var</div>
<div style="position:absolute;left:1314px;top:117px;width:31px;height:21px;overflow:hidden"><div style="position:absolute;left:0px;width:75px;top:4.2px;font-size:12.2px;color:#6a6a6a;text-align:center">var</div></div>
<div style="position:absolute;left:2px;top:139px;width:78px;height:20px;background:#cfe3f9;border:1px solid #8d99a6;box-sizing:border-box;box-shadow:inset 1px 1px 0 #fff"></div>
<div style="position:absolute;left:-160.5px;width:400px;top:141.33px;font-size:14px;line-height:normal;color:#000;font-weight:normal;white-space:pre;text-align:center;transform:scaleX(0.92);transform-origin:50% 0;">1</div>
<div style="position:absolute;left:2px;top:161px;width:78px;height:20px;background:#cfe3f9;border:1px solid #8d99a6;box-sizing:border-box;box-shadow:inset 1px 1px 0 #fff"></div>
<div style="position:absolute;left:-160.5px;width:400px;top:163.33px;font-size:14px;line-height:normal;color:#000;font-weight:normal;white-space:pre;text-align:center;transform:scaleX(0.92);transform-origin:50% 0;">2</div>
<div style="position:absolute;left:2px;top:183px;width:78px;height:20px;background:#cfe3f9;border:1px solid #8d99a6;box-sizing:border-box;box-shadow:inset 1px 1px 0 #fff"></div>
<div style="position:absolute;left:-160.5px;width:400px;top:185.33px;font-size:14px;line-height:normal;color:#000;font-weight:normal;white-space:pre;text-align:center;transform:scaleX(0.92);transform-origin:50% 0;">3</div>
<div style="position:absolute;left:2px;top:205px;width:78px;height:20px;background:#cfe3f9;border:1px solid #8d99a6;box-sizing:border-box;box-shadow:inset 1px 1px 0 #fff"></div>
<div style="position:absolute;left:-160.5px;width:400px;top:207.33px;font-size:14px;line-height:normal;color:#000;font-weight:normal;white-space:pre;text-align:center;transform:scaleX(0.92);transform-origin:50% 0;">4</div>
<div style="position:absolute;left:2px;top:227px;width:78px;height:20px;background:#cfe3f9;border:1px solid #8d99a6;box-sizing:border-box;box-shadow:inset 1px 1px 0 #fff"></div>
<div style="position:absolute;left:-160.5px;width:400px;top:229.33px;font-size:14px;line-height:normal;color:#000;font-weight:normal;white-space:pre;text-align:center;transform:scaleX(0.92);transform-origin:50% 0;">5</div>
<div style="position:absolute;left:2px;top:249px;width:78px;height:20px;background:#cfe3f9;border:1px solid #8d99a6;box-sizing:border-box;box-shadow:inset 1px 1px 0 #fff"></div>
<div style="position:absolute;left:-160.5px;width:400px;top:251.33px;font-size:14px;line-height:normal;color:#000;font-weight:normal;white-space:pre;text-align:center;transform:scaleX(0.92);transform-origin:50% 0;">6</div>
<div style="position:absolute;left:2px;top:271px;width:78px;height:20px;background:#cfe3f9;border:1px solid #8d99a6;box-sizing:border-box;box-shadow:inset 1px 1px 0 #fff"></div>
<div style="position:absolute;left:-160.5px;width:400px;top:273.33px;font-size:14px;line-height:normal;color:#000;font-weight:normal;white-space:pre;text-align:center;transform:scaleX(0.92);transform-origin:50% 0;">7</div>
<div style="position:absolute;left:2px;top:293px;width:78px;height:20px;background:#cfe3f9;border:1px solid #8d99a6;box-sizing:border-box;box-shadow:inset 1px 1px 0 #fff"></div>
<div style="position:absolute;left:-160.5px;width:400px;top:295.33px;font-size:14px;line-height:normal;color:#000;font-weight:normal;white-space:pre;text-align:center;transform:scaleX(0.92);transform-origin:50% 0;">8</div>
<div style="position:absolute;left:2px;top:315px;width:78px;height:20px;background:#cfe3f9;border:1px solid #8d99a6;box-sizing:border-box;box-shadow:inset 1px 1px 0 #fff"></div>
<div style="position:absolute;left:-160.5px;width:400px;top:317.33px;font-size:14px;line-height:normal;color:#000;font-weight:normal;white-space:pre;text-align:center;transform:scaleX(0.92);transform-origin:50% 0;">9</div>
<div style="position:absolute;left:2px;top:337px;width:78px;height:20px;background:#cfe3f9;border:1px solid #8d99a6;box-sizing:border-box;box-shadow:inset 1px 1px 0 #fff"></div>
<div style="position:absolute;left:-160.5px;width:400px;top:339.33px;font-size:14px;line-height:normal;color:#000;font-weight:normal;white-space:pre;text-align:center;transform:scaleX(0.92);transform-origin:50% 0;">10</div>
<div style="position:absolute;left:2px;top:359px;width:78px;height:20px;background:#cfe3f9;border:1px solid #8d99a6;box-sizing:border-box;box-shadow:inset 1px 1px 0 #fff"></div>
<div style="position:absolute;left:-160.5px;width:400px;top:361.33px;font-size:14px;line-height:normal;color:#707070;font-weight:normal;white-space:pre;text-align:center;transform:scaleX(0.92);transform-origin:50% 0;">11</div>
<div style="position:absolute;left:2px;top:381px;width:78px;height:20px;background:#cfe3f9;border:1px solid #8d99a6;box-sizing:border-box;box-shadow:inset 1px 1px 0 #fff"></div>
<div style="position:absolute;left:-160.5px;width:400px;top:383.33px;font-size:14px;line-height:normal;color:#707070;font-weight:normal;white-space:pre;text-align:center;transform:scaleX(0.92);transform-origin:50% 0;">12</div>
<div style="position:absolute;left:2px;top:403px;width:78px;height:20px;background:#cfe3f9;border:1px solid #8d99a6;box-sizing:border-box;box-shadow:inset 1px 1px 0 #fff"></div>
<div style="position:absolute;left:-160.5px;width:400px;top:405.33px;font-size:14px;line-height:normal;color:#707070;font-weight:normal;white-space:pre;text-align:center;transform:scaleX(0.92);transform-origin:50% 0;">13</div>
<div style="position:absolute;left:2px;top:425px;width:78px;height:20px;background:#cfe3f9;border:1px solid #8d99a6;box-sizing:border-box;box-shadow:inset 1px 1px 0 #fff"></div>
<div style="position:absolute;left:-160.5px;width:400px;top:427.33px;font-size:14px;line-height:normal;color:#707070;font-weight:normal;white-space:pre;text-align:center;transform:scaleX(0.92);transform-origin:50% 0;">14</div>
<div style="position:absolute;left:2px;top:447px;width:78px;height:20px;background:#cfe3f9;border:1px solid #8d99a6;box-sizing:border-box;box-shadow:inset 1px 1px 0 #fff"></div>
<div style="position:absolute;left:-160.5px;width:400px;top:449.33px;font-size:14px;line-height:normal;color:#707070;font-weight:normal;white-space:pre;text-align:center;transform:scaleX(0.92);transform-origin:50% 0;">15</div>
<div style="position:absolute;left:2px;top:469px;width:78px;height:20px;background:#cfe3f9;border:1px solid #8d99a6;box-sizing:border-box;box-shadow:inset 1px 1px 0 #fff"></div>
<div style="position:absolute;left:-160.5px;width:400px;top:471.33px;font-size:14px;line-height:normal;color:#707070;font-weight:normal;white-space:pre;text-align:center;transform:scaleX(0.92);transform-origin:50% 0;">16</div>
<div style="position:absolute;left:2px;top:491px;width:78px;height:20px;background:#cfe3f9;border:1px solid #8d99a6;box-sizing:border-box;box-shadow:inset 1px 1px 0 #fff"></div>
<div style="position:absolute;left:-160.5px;width:400px;top:493.33px;font-size:14px;line-height:normal;color:#707070;font-weight:normal;white-space:pre;text-align:center;transform:scaleX(0.92);transform-origin:50% 0;">17</div>
<div style="position:absolute;left:2px;top:513px;width:78px;height:20px;background:#cfe3f9;border:1px solid #8d99a6;box-sizing:border-box;box-shadow:inset 1px 1px 0 #fff"></div>
<div style="position:absolute;left:-160.5px;width:400px;top:515.33px;font-size:14px;line-height:normal;color:#707070;font-weight:normal;white-space:pre;text-align:center;transform:scaleX(0.92);transform-origin:50% 0;">18</div>
<div style="position:absolute;left:2px;top:535px;width:78px;height:20px;background:#cfe3f9;border:1px solid #8d99a6;box-sizing:border-box;box-shadow:inset 1px 1px 0 #fff"></div>
<div style="position:absolute;left:-160.5px;width:400px;top:537.33px;font-size:14px;line-height:normal;color:#707070;font-weight:normal;white-space:pre;text-align:center;transform:scaleX(0.92);transform-origin:50% 0;">19</div>
<div style="position:absolute;left:2px;top:557px;width:78px;height:20px;background:#cfe3f9;border:1px solid #8d99a6;box-sizing:border-box;box-shadow:inset 1px 1px 0 #fff"></div>
<div style="position:absolute;left:-160.5px;width:400px;top:559.33px;font-size:14px;line-height:normal;color:#707070;font-weight:normal;white-space:pre;text-align:center;transform:scaleX(0.92);transform-origin:50% 0;">20</div>
<div style="position:absolute;left:2px;top:579px;width:78px;height:20px;background:#cfe3f9;border:1px solid #8d99a6;box-sizing:border-box;box-shadow:inset 1px 1px 0 #fff"></div>
<div style="position:absolute;left:-160.5px;width:400px;top:581.33px;font-size:14px;line-height:normal;color:#707070;font-weight:normal;white-space:pre;text-align:center;transform:scaleX(0.92);transform-origin:50% 0;">21</div>
<div style="position:absolute;left:2px;top:601px;width:78px;height:20px;background:#cfe3f9;border:1px solid #8d99a6;box-sizing:border-box;box-shadow:inset 1px 1px 0 #fff"></div>
<div style="position:absolute;left:-160.5px;width:400px;top:603.33px;font-size:14px;line-height:normal;color:#707070;font-weight:normal;white-space:pre;text-align:center;transform:scaleX(0.92);transform-origin:50% 0;">22</div>
<div style="position:absolute;left:2px;top:623px;width:78px;height:20px;background:#cfe3f9;border:1px solid #8d99a6;box-sizing:border-box;box-shadow:inset 1px 1px 0 #fff"></div>
<div style="position:absolute;left:-160.5px;width:400px;top:625.33px;font-size:14px;line-height:normal;color:#707070;font-weight:normal;white-space:pre;text-align:center;transform:scaleX(0.92);transform-origin:50% 0;">23</div>
<div style="position:absolute;left:2px;top:645px;width:78px;height:1px;background:#8d99a6"></div>
<div style="position:absolute;right:1205.5px;top:141.33px;font-size:14px;line-height:normal;color:#000;font-weight:normal;white-space:pre;text-align:right;transform:scaleX(0.91);transform-origin:100% 0;">3200000.00</div>
<div style="position:absolute;right:1123.5px;top:141.33px;font-size:14px;line-height:normal;color:#000;font-weight:normal;white-space:pre;text-align:right;transform:scaleX(0.91);transform-origin:100% 0;">2.60</div>
<div style="position:absolute;right:1041.5px;top:141.33px;font-size:14px;line-height:normal;color:#000;font-weight:normal;white-space:pre;text-align:right;transform:scaleX(0.91);transform-origin:100% 0;">Tidak puas</div>
<div style="position:absolute;right:914.5px;top:141.33px;font-size:14px;line-height:normal;color:#000;font-weight:normal;white-space:pre;text-align:right;transform:scaleX(0.91);transform-origin:100% 0;">.00833</div>
<div style="position:absolute;right:832.5px;top:141.33px;font-size:14px;line-height:normal;color:#000;font-weight:normal;white-space:pre;text-align:right;transform:scaleX(0.91);transform-origin:100% 0;">Tidak puas</div>
<div style="position:absolute;right:705.5px;top:141.33px;font-size:14px;line-height:normal;color:#000;font-weight:normal;white-space:pre;text-align:right;transform:scaleX(0.91);transform-origin:100% 0;">-1.20720</div>
<div style="position:absolute;right:605.5px;top:141.33px;font-size:14px;line-height:normal;color:#000;font-weight:normal;white-space:pre;text-align:right;transform:scaleX(0.91);transform-origin:100% 0;">.88990</div>
<div style="position:absolute;right:505.5px;top:141.33px;font-size:14px;line-height:normal;color:#000;font-weight:normal;white-space:pre;text-align:right;transform:scaleX(0.91);transform-origin:100% 0;">.11010</div>
<div style="position:absolute;right:1205.5px;top:163.33px;font-size:14px;line-height:normal;color:#000;font-weight:normal;white-space:pre;text-align:right;transform:scaleX(0.91);transform-origin:100% 0;">3500000.00</div>
<div style="position:absolute;right:1123.5px;top:163.33px;font-size:14px;line-height:normal;color:#000;font-weight:normal;white-space:pre;text-align:right;transform:scaleX(0.91);transform-origin:100% 0;">2.40</div>
<div style="position:absolute;right:1041.5px;top:163.33px;font-size:14px;line-height:normal;color:#000;font-weight:normal;white-space:pre;text-align:right;transform:scaleX(0.91);transform-origin:100% 0;">Tidak puas</div>
<div style="position:absolute;right:914.5px;top:163.33px;font-size:14px;line-height:normal;color:#000;font-weight:normal;white-space:pre;text-align:right;transform:scaleX(0.91);transform-origin:100% 0;">.25615</div>
<div style="position:absolute;right:832.5px;top:163.33px;font-size:14px;line-height:normal;color:#000;font-weight:normal;white-space:pre;text-align:right;transform:scaleX(0.91);transform-origin:100% 0;">Tidak puas</div>
<div style="position:absolute;right:705.5px;top:163.33px;font-size:14px;line-height:normal;color:#000;font-weight:normal;white-space:pre;text-align:right;transform:scaleX(0.91);transform-origin:100% 0;">-1.66275</div>
<div style="position:absolute;right:605.5px;top:163.33px;font-size:14px;line-height:normal;color:#000;font-weight:normal;white-space:pre;text-align:right;transform:scaleX(0.91);transform-origin:100% 0;">.94677</div>
<div style="position:absolute;right:505.5px;top:163.33px;font-size:14px;line-height:normal;color:#000;font-weight:normal;white-space:pre;text-align:right;transform:scaleX(0.91);transform-origin:100% 0;">.05323</div>
<div style="position:absolute;right:1205.5px;top:185.33px;font-size:14px;line-height:normal;color:#000;font-weight:normal;white-space:pre;text-align:right;transform:scaleX(0.91);transform-origin:100% 0;">2300000.00</div>
<div style="position:absolute;right:1123.5px;top:185.33px;font-size:14px;line-height:normal;color:#000;font-weight:normal;white-space:pre;text-align:right;transform:scaleX(0.91);transform-origin:100% 0;">2.70</div>
<div style="position:absolute;right:1041.5px;top:185.33px;font-size:14px;line-height:normal;color:#000;font-weight:normal;white-space:pre;text-align:right;transform:scaleX(0.91);transform-origin:100% 0;">Tidak puas</div>
<div style="position:absolute;right:914.5px;top:185.33px;font-size:14px;line-height:normal;color:#000;font-weight:normal;white-space:pre;text-align:right;transform:scaleX(0.91);transform-origin:100% 0;">-.30911</div>
<div style="position:absolute;right:832.5px;top:185.33px;font-size:14px;line-height:normal;color:#000;font-weight:normal;white-space:pre;text-align:right;transform:scaleX(0.91);transform-origin:100% 0;">Tidak puas</div>
<div style="position:absolute;right:705.5px;top:185.33px;font-size:14px;line-height:normal;color:#000;font-weight:normal;white-space:pre;text-align:right;transform:scaleX(0.91);transform-origin:100% 0;">-.97943</div>
<div style="position:absolute;right:605.5px;top:185.33px;font-size:14px;line-height:normal;color:#000;font-weight:normal;white-space:pre;text-align:right;transform:scaleX(0.91);transform-origin:100% 0;">.84494</div>
<div style="position:absolute;right:505.5px;top:185.33px;font-size:14px;line-height:normal;color:#000;font-weight:normal;white-space:pre;text-align:right;transform:scaleX(0.91);transform-origin:100% 0;">.15506</div>
<div style="position:absolute;right:1205.5px;top:207.33px;font-size:14px;line-height:normal;color:#000;font-weight:normal;white-space:pre;text-align:right;transform:scaleX(0.91);transform-origin:100% 0;">2500000.00</div>
<div style="position:absolute;right:1123.5px;top:207.33px;font-size:14px;line-height:normal;color:#000;font-weight:normal;white-space:pre;text-align:right;transform:scaleX(0.91);transform-origin:100% 0;">3.20</div>
<div style="position:absolute;right:1041.5px;top:207.33px;font-size:14px;line-height:normal;color:#000;font-weight:normal;white-space:pre;text-align:right;transform:scaleX(0.91);transform-origin:100% 0;">Puas</div>
<div style="position:absolute;right:914.5px;top:207.33px;font-size:14px;line-height:normal;color:#000;font-weight:normal;white-space:pre;text-align:right;transform:scaleX(0.91);transform-origin:100% 0;">.31650</div>
<div style="position:absolute;right:832.5px;top:207.33px;font-size:14px;line-height:normal;color:#000;font-weight:normal;white-space:pre;text-align:right;transform:scaleX(0.91);transform-origin:100% 0;">Puas</div>
<div style="position:absolute;right:705.5px;top:207.33px;font-size:14px;line-height:normal;color:#000;font-weight:normal;white-space:pre;text-align:right;transform:scaleX(0.91);transform-origin:100% 0;">.15944</div>
<div style="position:absolute;right:605.5px;top:207.33px;font-size:14px;line-height:normal;color:#000;font-weight:normal;white-space:pre;text-align:right;transform:scaleX(0.91);transform-origin:100% 0;">.43143</div>
<div style="position:absolute;right:505.5px;top:207.33px;font-size:14px;line-height:normal;color:#000;font-weight:normal;white-space:pre;text-align:right;transform:scaleX(0.91);transform-origin:100% 0;">.56857</div>
<div style="position:absolute;right:1205.5px;top:229.33px;font-size:14px;line-height:normal;color:#000;font-weight:normal;white-space:pre;text-align:right;transform:scaleX(0.91);transform-origin:100% 0;">3000000.00</div>
<div style="position:absolute;right:1123.5px;top:229.33px;font-size:14px;line-height:normal;color:#000;font-weight:normal;white-space:pre;text-align:right;transform:scaleX(0.91);transform-origin:100% 0;">3.50</div>
<div style="position:absolute;right:1041.5px;top:229.33px;font-size:14px;line-height:normal;color:#000;font-weight:normal;white-space:pre;text-align:right;transform:scaleX(0.91);transform-origin:100% 0;">Puas</div>
<div style="position:absolute;right:914.5px;top:229.33px;font-size:14px;line-height:normal;color:#000;font-weight:normal;white-space:pre;text-align:right;transform:scaleX(0.91);transform-origin:100% 0;">.18992</div>
<div style="position:absolute;right:832.5px;top:229.33px;font-size:14px;line-height:normal;color:#000;font-weight:normal;white-space:pre;text-align:right;transform:scaleX(0.91);transform-origin:100% 0;">Puas</div>
<div style="position:absolute;right:705.5px;top:229.33px;font-size:14px;line-height:normal;color:#000;font-weight:normal;white-space:pre;text-align:right;transform:scaleX(0.91);transform-origin:100% 0;">.84276</div>
<div style="position:absolute;right:605.5px;top:229.33px;font-size:14px;line-height:normal;color:#000;font-weight:normal;white-space:pre;text-align:right;transform:scaleX(0.91);transform-origin:100% 0;">.18864</div>
<div style="position:absolute;right:505.5px;top:229.33px;font-size:14px;line-height:normal;color:#000;font-weight:normal;white-space:pre;text-align:right;transform:scaleX(0.91);transform-origin:100% 0;">.81136</div>
<div style="position:absolute;right:1205.5px;top:251.33px;font-size:14px;line-height:normal;color:#000;font-weight:normal;white-space:pre;text-align:right;transform:scaleX(0.91);transform-origin:100% 0;">4000000.00</div>
<div style="position:absolute;right:1123.5px;top:251.33px;font-size:14px;line-height:normal;color:#000;font-weight:normal;white-space:pre;text-align:right;transform:scaleX(0.91);transform-origin:100% 0;">3.80</div>
<div style="position:absolute;right:1041.5px;top:251.33px;font-size:14px;line-height:normal;color:#000;font-weight:normal;white-space:pre;text-align:right;transform:scaleX(0.91);transform-origin:100% 0;">Puas</div>
<div style="position:absolute;right:914.5px;top:251.33px;font-size:14px;line-height:normal;color:#000;font-weight:normal;white-space:pre;text-align:right;transform:scaleX(0.91);transform-origin:100% 0;">.19236</div>
<div style="position:absolute;right:832.5px;top:251.33px;font-size:14px;line-height:normal;color:#000;font-weight:normal;white-space:pre;text-align:right;transform:scaleX(0.91);transform-origin:100% 0;">Puas</div>
<div style="position:absolute;right:705.5px;top:251.33px;font-size:14px;line-height:normal;color:#000;font-weight:normal;white-space:pre;text-align:right;transform:scaleX(0.91);transform-origin:100% 0;">1.52608</div>
<div style="position:absolute;right:605.5px;top:251.33px;font-size:14px;line-height:normal;color:#000;font-weight:normal;white-space:pre;text-align:right;transform:scaleX(0.91);transform-origin:100% 0;">.06650</div>
<div style="position:absolute;right:505.5px;top:251.33px;font-size:14px;line-height:normal;color:#000;font-weight:normal;white-space:pre;text-align:right;transform:scaleX(0.91);transform-origin:100% 0;">.93350</div>
<div style="position:absolute;right:1205.5px;top:273.33px;font-size:14px;line-height:normal;color:#000;font-weight:normal;white-space:pre;text-align:right;transform:scaleX(0.91);transform-origin:100% 0;">1300000.00</div>
<div style="position:absolute;right:1123.5px;top:273.33px;font-size:14px;line-height:normal;color:#000;font-weight:normal;white-space:pre;text-align:right;transform:scaleX(0.91);transform-origin:100% 0;">2.30</div>
<div style="position:absolute;right:1041.5px;top:273.33px;font-size:14px;line-height:normal;color:#000;font-weight:normal;white-space:pre;text-align:right;transform:scaleX(0.91);transform-origin:100% 0;">Tidak puas</div>
<div style="position:absolute;right:914.5px;top:273.33px;font-size:14px;line-height:normal;color:#000;font-weight:normal;white-space:pre;text-align:right;transform:scaleX(0.91);transform-origin:100% 0;">-.22635</div>
<div style="position:absolute;right:832.5px;top:273.33px;font-size:14px;line-height:normal;color:#000;font-weight:normal;white-space:pre;text-align:right;transform:scaleX(0.91);transform-origin:100% 0;">Tidak puas</div>
<div style="position:absolute;right:705.5px;top:273.33px;font-size:14px;line-height:normal;color:#000;font-weight:normal;white-space:pre;text-align:right;transform:scaleX(0.91);transform-origin:100% 0;">-1.89052</div>
<div style="position:absolute;right:605.5px;top:273.33px;font-size:14px;line-height:normal;color:#000;font-weight:normal;white-space:pre;text-align:right;transform:scaleX(0.91);transform-origin:100% 0;">.96348</div>
<div style="position:absolute;right:505.5px;top:273.33px;font-size:14px;line-height:normal;color:#000;font-weight:normal;white-space:pre;text-align:right;transform:scaleX(0.91);transform-origin:100% 0;">.03652</div>
<div style="position:absolute;right:1205.5px;top:295.33px;font-size:14px;line-height:normal;color:#000;font-weight:normal;white-space:pre;text-align:right;transform:scaleX(0.91);transform-origin:100% 0;">4000000.00</div>
<div style="position:absolute;right:1123.5px;top:295.33px;font-size:14px;line-height:normal;color:#000;font-weight:normal;white-space:pre;text-align:right;transform:scaleX(0.91);transform-origin:100% 0;">3.75</div>
<div style="position:absolute;right:1041.5px;top:295.33px;font-size:14px;line-height:normal;color:#000;font-weight:normal;white-space:pre;text-align:right;transform:scaleX(0.91);transform-origin:100% 0;">Tidak puas</div>
<div style="position:absolute;right:914.5px;top:295.33px;font-size:14px;line-height:normal;color:#000;font-weight:normal;white-space:pre;text-align:right;transform:scaleX(0.91);transform-origin:100% 0;">-.76504</div>
<div style="position:absolute;right:832.5px;top:295.33px;font-size:14px;line-height:normal;color:#000;font-weight:normal;white-space:pre;text-align:right;transform:scaleX(0.91);transform-origin:100% 0;">Puas</div>
<div style="position:absolute;right:705.5px;top:295.33px;font-size:14px;line-height:normal;color:#000;font-weight:normal;white-space:pre;text-align:right;transform:scaleX(0.91);transform-origin:100% 0;">1.41219</div>
<div style="position:absolute;right:605.5px;top:295.33px;font-size:14px;line-height:normal;color:#000;font-weight:normal;white-space:pre;text-align:right;transform:scaleX(0.91);transform-origin:100% 0;">.07983</div>
<div style="position:absolute;right:505.5px;top:295.33px;font-size:14px;line-height:normal;color:#000;font-weight:normal;white-space:pre;text-align:right;transform:scaleX(0.91);transform-origin:100% 0;">.92017</div>
<div style="position:absolute;right:1205.5px;top:317.33px;font-size:14px;line-height:normal;color:#000;font-weight:normal;white-space:pre;text-align:right;transform:scaleX(0.91);transform-origin:100% 0;">3000000.00</div>
<div style="position:absolute;right:1123.5px;top:317.33px;font-size:14px;line-height:normal;color:#000;font-weight:normal;white-space:pre;text-align:right;transform:scaleX(0.91);transform-origin:100% 0;">3.45</div>
<div style="position:absolute;right:1041.5px;top:317.33px;font-size:14px;line-height:normal;color:#000;font-weight:normal;white-space:pre;text-align:right;transform:scaleX(0.91);transform-origin:100% 0;">Puas</div>
<div style="position:absolute;right:914.5px;top:317.33px;font-size:14px;line-height:normal;color:#000;font-weight:normal;white-space:pre;text-align:right;transform:scaleX(0.91);transform-origin:100% 0;">.23252</div>
<div style="position:absolute;right:832.5px;top:317.33px;font-size:14px;line-height:normal;color:#000;font-weight:normal;white-space:pre;text-align:right;transform:scaleX(0.91);transform-origin:100% 0;">Puas</div>
<div style="position:absolute;right:705.5px;top:317.33px;font-size:14px;line-height:normal;color:#000;font-weight:normal;white-space:pre;text-align:right;transform:scaleX(0.91);transform-origin:100% 0;">.72887</div>
<div style="position:absolute;right:605.5px;top:317.33px;font-size:14px;line-height:normal;color:#000;font-weight:normal;white-space:pre;text-align:right;transform:scaleX(0.91);transform-origin:100% 0;">.22067</div>
<div style="position:absolute;right:505.5px;top:317.33px;font-size:14px;line-height:normal;color:#000;font-weight:normal;white-space:pre;text-align:right;transform:scaleX(0.91);transform-origin:100% 0;">.77933</div>
<div style="position:absolute;right:1205.5px;top:339.33px;font-size:14px;line-height:normal;color:#000;font-weight:normal;white-space:pre;text-align:right;transform:scaleX(0.91);transform-origin:100% 0;">3000000.00</div>
<div style="position:absolute;right:1123.5px;top:339.33px;font-size:14px;line-height:normal;color:#000;font-weight:normal;white-space:pre;text-align:right;transform:scaleX(0.91);transform-origin:100% 0;">3.60</div>
<div style="position:absolute;right:1041.5px;top:339.33px;font-size:14px;line-height:normal;color:#000;font-weight:normal;white-space:pre;text-align:right;transform:scaleX(0.91);transform-origin:100% 0;">Puas</div>
<div style="position:absolute;right:914.5px;top:339.33px;font-size:14px;line-height:normal;color:#000;font-weight:normal;white-space:pre;text-align:right;transform:scaleX(0.91);transform-origin:100% 0;">.10472</div>
<div style="position:absolute;right:832.5px;top:339.33px;font-size:14px;line-height:normal;color:#000;font-weight:normal;white-space:pre;text-align:right;transform:scaleX(0.91);transform-origin:100% 0;">Puas</div>
<div style="position:absolute;right:705.5px;top:339.33px;font-size:14px;line-height:normal;color:#000;font-weight:normal;white-space:pre;text-align:right;transform:scaleX(0.91);transform-origin:100% 0;">1.07053</div>
<div style="position:absolute;right:605.5px;top:339.33px;font-size:14px;line-height:normal;color:#000;font-weight:normal;white-space:pre;text-align:right;transform:scaleX(0.91);transform-origin:100% 0;">.13550</div>
<div style="position:absolute;right:505.5px;top:339.33px;font-size:14px;line-height:normal;color:#000;font-weight:normal;white-space:pre;text-align:right;transform:scaleX(0.91);transform-origin:100% 0;">.86450</div>
<div style="position:absolute;left:1240px;top:337px;width:72px;height:21px;border:1px solid #000;box-shadow:inset 0 0 0 1px rgba(0,0,0,0.45);box-sizing:border-box;background:#fff"></div>
<div style="position:absolute;left:1345px;top:139px;width:16px;height:507px;background:#e3eefa"></div>
<div style="position:absolute;left:1345px;top:372px;width:15px;height:260px;background:linear-gradient(90deg,#fdfdfd,#e6e6ee 40%,#d4d2de 90%);border-left:1px solid #7a8088;border-right:1px solid #0a4a9a;box-sizing:border-box"></div>
<div style="position:absolute;left:1345px;top:139px;width:15px;height:15px;background:#a9cff8;border:1px solid #1a6fd0;box-sizing:border-box"></div>
<svg style="position:absolute;left:1345.5px;top:141px" width="14" height="10" viewBox="0 0 14 10"><path d="M2 8 L7 3 L12 8z" fill="#555"/></svg>
<div style="position:absolute;left:1345px;top:153px;width:15px;height:220px;background:linear-gradient(90deg,#a8c8ec 0%,#7aaee0 30%,#4a8ad0 70%,#2f6fc0 100%);border:1px solid #1a6fd0;box-sizing:border-box"></div>
<div style="position:absolute;left:1345px;top:631px;width:15px;height:15px;background:#a9cff8;border:1px solid #1a6fd0;box-sizing:border-box"></div>
<svg style="position:absolute;left:1345.5px;top:633px" width="14" height="10" viewBox="0 0 14 10"><path d="M2 3 L12 3 L7 8z" fill="#555"/></svg>
<div style="position:absolute;left:82px;top:645px;width:1263px;height:1px;background:#fff"></div>
<div style="position:absolute;left:1023px;top:646px;width:308px;height:15px;background:linear-gradient(#fdfdfd,#dddce6 40%,#d4d2de 80%,#7a7a80);border-top:1px solid #1a7ae0;border-bottom:1px solid #0a3a7a;box-sizing:border-box"></div>
<div style="position:absolute;left:82px;top:646px;width:15px;height:15px;background:#a9cff8;border:1px solid #1a6fd0;box-sizing:border-box"></div>
<svg style="position:absolute;left:83px;top:647px" width="12" height="13" viewBox="0 0 12 13"><path d="M4 6.5 L9 2 L9 11z" fill="#555"/></svg>
<div style="position:absolute;left:96px;top:646px;width:927px;height:15px;background:linear-gradient(#b0d0f0 0%,#80b0e0 35%,#4a8ad0 70%,#3a7cc8 90%,#0a3a7a 100%);border-top:1px solid #1a7ae0;border-left:1px solid #1a7ae0;border-right:1px solid #3aa0ff;box-sizing:border-box"></div>
<div style="position:absolute;left:1330px;top:646px;width:15px;height:15px;background:#a9cff8;border:1px solid #0a4aa0;box-sizing:border-box"></div>
<svg style="position:absolute;left:1331px;top:647px" width="12" height="13" viewBox="0 0 12 13"><path d="M3.5 2 L8.5 6.5 L3.5 11z" fill="#555"/></svg>
<div style="position:absolute;left:0px;top:663px;width:1366px;height:1px;background:#c8f0ff"></div>
<div style="position:absolute;left:0px;top:664px;width:1366px;height:2px;background:#96c8f8"></div>
<div style="position:absolute;left:0px;top:666px;width:1366px;height:2px;background:#6c94bc"></div>
<div style="position:absolute;left:0px;top:668px;width:1366px;height:1px;background:#fff"></div>
<div style="position:absolute;left:1362px;top:115px;width:4px;height:548px;background:#96c8f8"></div>
<div style="position:absolute;left:1362px;top:115px;width:1px;height:548px;background:#c8f0ff"></div>
<div style="position:absolute;left:1363.5px;top:382.2px;width:3.6px;height:3.6px;border-radius:50%;background:radial-gradient(circle at 35% 35%,#9ab0e0,#101a50)"></div>
<div style="position:absolute;left:1363.5px;top:386.9px;width:3.6px;height:3.6px;border-radius:50%;background:radial-gradient(circle at 35% 35%,#9ab0e0,#101a50)"></div>
<div style="position:absolute;left:1363.5px;top:391.59999999999997px;width:3.6px;height:3.6px;border-radius:50%;background:radial-gradient(circle at 35% 35%,#9ab0e0,#101a50)"></div>
<div style="position:absolute;left:676px;top:663.8px;width:3.6px;height:3.6px;border-radius:50%;background:radial-gradient(circle at 35% 35%,#9ab0e0,#101a50)"></div>
<div style="position:absolute;left:681px;top:663.8px;width:3.6px;height:3.6px;border-radius:50%;background:radial-gradient(circle at 35% 35%,#9ab0e0,#101a50)"></div>
<div style="position:absolute;left:686px;top:663.8px;width:3.6px;height:3.6px;border-radius:50%;background:radial-gradient(circle at 35% 35%,#9ab0e0,#101a50)"></div>
<div style="position:absolute;left:0px;top:669px;width:1366px;height:37px;background:linear-gradient(#e6eefa 0%,#e6ecf6 40%,#dcdce8 100%)"></div>
<div style="position:absolute;left:6px;top:669px;width:65px;height:32px;background:linear-gradient(#fcc248 0%,#fdd98a 60%,#fde6b0 100%);border:1px solid #8aa8cc;border-top:none;border-radius:0 0 3px 3px;box-sizing:border-box"></div>
<div style="position:absolute;left:11px;top:678.96px;font-size:12.2px;line-height:normal;color:#000;font-weight:bold;white-space:pre;">Data View</div>
<div style="position:absolute;left:73px;top:670px;width:82px;height:29px;background:linear-gradient(#a8c8ec 0%,#8cb4e0 50%,#7aa4d6 100%);border:1px solid #7898c0;border-top:none;border-radius:0 0 3px 3px;box-sizing:border-box"></div>
<div style="position:absolute;left:77px;top:676.87px;font-size:12.3px;line-height:normal;color:#000;font-weight:normal;white-space:pre;">Variable View</div>
<div style="position:absolute;left:0px;top:706px;width:1366px;height:22px;background:#fff"></div>
<div style="position:absolute;left:0px;top:727px;width:1366px;height:1px;background:#a8a8a8"></div>
<div style="position:absolute;left:4px;top:708px;width:920px;height:17px;background:#e3eefa;border-top:1px solid #a0a0a0;border-left:1px solid #a0a0a0;box-sizing:border-box"></div>
<div style="position:absolute;left:925px;top:708px;width:225px;height:17px;background:#e3eefa;border-top:1px solid #a0a0a0;border-left:1px solid #a0a0a0;box-sizing:border-box"></div>
<div style="position:absolute;left:1151px;top:708px;width:17px;height:17px;background:#e3eefa;border-top:1px solid #a0a0a0;border-left:1px solid #a0a0a0;box-sizing:border-box"></div>
<div style="position:absolute;left:1169px;top:708px;width:26px;height:17px;background:#e3eefa;border-top:1px solid #a0a0a0;border-left:1px solid #a0a0a0;box-sizing:border-box"></div>
<div style="position:absolute;left:1196px;top:708px;width:78px;height:17px;background:#e3eefa;border-top:1px solid #a0a0a0;border-left:1px solid #a0a0a0;box-sizing:border-box"></div>
<div style="position:absolute;left:1275px;top:708px;width:29px;height:17px;background:#e3eefa;border-top:1px solid #a0a0a0;border-left:1px solid #a0a0a0;box-sizing:border-box"></div>
<div style="position:absolute;left:1304px;top:708px;width:30px;height:17px;background:#e3eefa;border-top:1px solid #a0a0a0;border-left:1px solid #a0a0a0;box-sizing:border-box"></div>
<div style="position:absolute;left:1335px;top:708px;width:29px;height:17px;background:#e3eefa;border-top:1px solid #a0a0a0;border-left:1px solid #a0a0a0;box-sizing:border-box"></div>
<div style="position:absolute;left:927.5px;top:710.96px;font-size:12.2px;line-height:normal;color:#000;font-weight:normal;white-space:pre;">IBM SPSS Statistics Processor is ready</div>
<div style="position:absolute;left:1199px;top:711.17px;font-size:12.3px;line-height:normal;color:#000;font-weight:normal;white-space:pre;">Unicode:ON</div>
<div style="position:absolute;left:0px;top:728px;width:1366px;height:40px;background:linear-gradient(90deg,#253a45 0%,#243844 30%,#233544 54%,#1f2e43 77%,#1b2a4a 100%)"></div>
<svg style="position:absolute;left:15px;top:739px" width="18" height="18" viewBox="0 0 18 18">
<path d="M1 3.2 L7 2.3 V8 H1z M8 2.1 L17 0.8 V8 H8z M1 9 H7 V14.8 L1 13.9z M8 9 H17 V17.2 L8 15.9z" fill="#fff"/></svg>
<div style="position:absolute;left:48px;top:728px;width:344px;height:40px;background:#f0f0f0;border-top:1px solid #c8c8c8;border-left:1px solid #bdbdbd;box-sizing:border-box"></div>
<div style="position:absolute;left:48px;top:767px;width:344px;height:1px;background:#cfcfcf"></div>
<svg style="position:absolute;left:59px;top:739px" width="19" height="19" viewBox="0 0 19 19">
<circle cx="11.2" cy="7.4" r="5.6" fill="none" stroke="#222" stroke-width="1.3"/><path d="M7.2 11.4 L1.2 17.4" stroke="#222" stroke-width="1.5"/></svg>
<div style="position:absolute;left:88.5px;top:740.7px;font-size:14.7px;line-height:normal;color:#303030;font-weight:normal;white-space:pre;letter-spacing:-0.1px">Type here to search</div>
<div style="position:absolute;left:408.5px;top:740.5px;width:11px;height:11px;border:2px solid #fff;border-radius:50%"></div>
<svg style="position:absolute;left:450px;top:735px" width="28" height="25" viewBox="450 735 28 25">
<path d="M456.5 739.8 V742.5 H466.5 V739.8 M456.5 755 V752.5 H466.5 V755 M470.5 739.8 V742.6 M470.5 748 V755" fill="none" stroke="#fff" stroke-width="1.05"/>
<rect x="456.5" y="744.5" width="10" height="6" fill="none" stroke="#fff" stroke-width="1.05"/>
<rect x="469" y="744.1" width="3" height="2.9" fill="#fff"/></svg>
<div style="position:absolute;left:495px;top:766px;width:40px;height:2px;background:#76b9ed"></div>
<div style="position:absolute;left:544px;top:766px;width:40px;height:2px;background:#76b9ed"></div>
<div style="position:absolute;left:642px;top:766px;width:40px;height:2px;background:#76b9ed"></div>
<div style="position:absolute;left:789px;top:766px;width:40px;height:2px;background:#76b9ed"></div>
<div style="position:absolute;left:887px;top:766px;width:40px;height:2px;background:#76b9ed"></div>
<div style="position:absolute;left:936px;top:766px;width:40px;height:2px;background:#76b9ed"></div>
<div style="position:absolute;left:981px;top:766px;width:49px;height:2px;background:#76b9ed"></div>
<div style="position:absolute;left:674px;top:766px;width:8px;height:2px;background:#5a8ab8"></div>
<div style="position:absolute;left:966px;top:766px;width:10px;height:2px;background:#5a8ab8"></div>
<div style="position:absolute;left:834px;top:728px;width:48px;height:40px;background:#a5652f"></div>
<div style="position:absolute;left:834px;top:766px;width:48px;height:2px;background:#f7630c"></div>
<div style="position:absolute;left:981px;top:728px;width:44px;height:38px;background:#4c5c6b"></div>
<div style="position:absolute;left:1025px;top:728px;width:1px;height:38px;background:#2f3a45"></div>
<div style="position:absolute;left:1026px;top:728px;width:3px;height:38px;background:#44525e"></div>
<div style="position:absolute;left:1361px;top:728px;width:1px;height:40px;background:#6a7890"></div>
<svg style="position:absolute;left:0;top:0;pointer-events:none" width="1366" height="768" viewBox="0 0 1366 768"><defs><linearGradient id="edg" x1="0" y1="0" x2="1" y2="0.6"><stop offset="0" stop-color="#2aa8f0"/><stop offset="0.55" stop-color="#33c8c8"/><stop offset="1" stop-color="#6ce35a"/></linearGradient>
<linearGradient id="edg2" x1="0" y1="0" x2="0.8" y2="1"><stop offset="0" stop-color="#1b8ee6"/><stop offset="1" stop-color="#0f4fa6"/></linearGradient></defs><circle cx="515" cy="747.8" r="12" fill="url(#edg)"/><path d="M503.2 746 Q505 741 513 741 Q516 741 517.5 742.5 Q511 742.5 509.5 747.5 Q508.5 754 515 757 Q521 758.5 526.3 752.8 A12 12 0 0 1 503.2 746 Z" fill="#1c8fe6"/><path d="M511.5 749.5 Q513.5 753.5 518.5 753.5 Q523 753.5 526.8 752.6 A12 12 0 0 1 512.5 759.5 Q508.5 756 511.5 749.5 Z" fill="#1060bc"/><path d="M512.5 749.5 Q512 745.5 515.5 745.3 Q518.5 745.5 518.5 748.5 Q521 751 527 751.2 L526.8 753 Q521 754.5 517 752.5 Q513 752 512.5 749.5z" fill="#243743"/><path d="M553 739.3 h9.5 l1.2 1.3 h10.8 v15.6 h-21.5z" fill="#e8a81a"/><rect x="553" y="741.7" width="21.5" height="14.5" fill="#ffd45e"/><path d="M557 757 v-7.8 h14 v7.8 h-3.8 v-4.6 h-6.4 v4.6z" fill="#3c96e8"/><defs><linearGradient id="mailb" x1="0" y1="0" x2="0.4" y2="1"><stop offset="0" stop-color="#3cc4f8"/><stop offset="1" stop-color="#1a8ae0"/></linearGradient></defs><rect x="601" y="743.3" width="24" height="15.5" fill="url(#mailb)"/><path d="M601 743.5 L612.8 736.4 L625 743.5z" fill="#0a62c4"/><path d="M603 744 H622.5 L612.8 748.8z" fill="#f4f4f4"/><rect x="608.6" y="747.3" width="28" height="16.3" rx="8.1" fill="rgba(34,38,44,0.82)" stroke="#a8acb2" stroke-width="0.8"/><defs><linearGradient id="wordg" x1="0" y1="0" x2="1" y2="1"><stop offset="0" stop-color="#b8d4f4"/><stop offset="0.5" stop-color="#f0f6fe"/><stop offset="1" stop-color="#ffffff"/></linearGradient><linearGradient id="wordw" x1="0" y1="0" x2="0" y2="1"><stop offset="0" stop-color="#3a8ae8"/><stop offset="1" stop-color="#0a3aa8"/></linearGradient><linearGradient id="storeg" x1="0" y1="0" x2="0" y2="1"><stop offset="0" stop-color="#ffffff"/><stop offset="1" stop-color="#e4e4e4"/></linearGradient></defs><path d="M652.5 736 H671.8 V757.5 H650.3 V738.2 Q650.3 736 652.5 736z" fill="url(#wordg)"/><path d="M671.3 736 V757 H650.3" fill="none" stroke="#1a3a9a" stroke-width="1"/><path d="M653.5 740 h3.2 l1.6 7.5 l2.2-7.5 h2.4 l2.2 7.5 l1.6-7.5 h3 l-3.2 12 h-2.8 l-2-7 l-2 7 h-2.8z" fill="url(#wordw)"/><path d="M652 752 q6-1 10 1.5 l9.5-4.5 l-1.5 7.5 h-18z" fill="#fff" opacity="0.9"/><path d="M705 743 V738.8 Q705 738 706 738 H715 Q716 738 716 738.8 V743" fill="none" stroke="#1ab0f0" stroke-width="2"/><rect x="699" y="740.7" width="23" height="19.3" rx="2.5" fill="url(#storeg)"/><rect x="706" y="746" width="4" height="3.8" fill="#f25022"/><rect x="711" y="746" width="4" height="3.8" fill="#7fba00"/><rect x="706" y="751" width="4" height="3.8" fill="#00a4ef"/><rect x="711" y="751" width="4" height="3.8" fill="#ffb900"/><defs><linearGradient id="mtl" x1="0" y1="0" x2="1" y2="1"><stop offset="0" stop-color="#f8d040"/><stop offset="0.45" stop-color="#e06a1a"/><stop offset="1" stop-color="#a02a10"/></linearGradient></defs><path d="M748.7 749 l7-4.5 l3.5 3 l-3 4z" fill="#4aa0e0"/><path d="M755 745 l9-7.8 q4 8 7.3 17.4 l-5-3 q-4 3-8 7.2 q-1-8-3.3-13.8z" fill="url(#mtl)"/><path d="M764 737.2 q-3 10-5.6 21 q3-4 6-7 z" fill="#c8401a"/><circle cx="808.5" cy="747.5" r="11.5" fill="#db4437"/><path d="M808.5 747.5 L818.46 741.75 A11.5 11.5 0 0 1 808.5 759 Z" fill="#f4c20d"/><path d="M808.5 747.5 L808.5 759 A11.5 11.5 0 0 1 798.54 741.75 Z" fill="#0f9d58"/><circle cx="808.5" cy="747.5" r="5.3" fill="#fff"/><circle cx="808.5" cy="747.5" r="4.2" fill="#4285f4"/><circle cx="815" cy="754.5" r="7.3" fill="#0d5aa8" stroke="#1f2e40" stroke-width="0.8"/><circle cx="858" cy="747" r="10" fill="#fff"/><circle cx="858" cy="747" r="8" fill="#2ecc5e"/><path d="M849 758 l2-5 l4 3z" fill="#fff"/><path d="M854 743 q0 6 7 8 l1.5-1.5 l-2-1.5 l-1 1 q-3-1-4-4 l1-1 l-1.5-2z" fill="#fff"/><circle cx="864" cy="754.2" r="8" fill="#f40a0a"/><defs><linearGradient id="pptg" x1="0" y1="0" x2="1" y2="0.8"><stop offset="0" stop-color="#f07a3a"/><stop offset="0.45" stop-color="#fde0c8"/><stop offset="1" stop-color="#f06a30"/></linearGradient><linearGradient id="xlsg" x1="0" y1="0" x2="1" y2="0.8"><stop offset="0" stop-color="#3aa03a"/><stop offset="0.45" stop-color="#e0f4d8"/><stop offset="1" stop-color="#3a9a3a"/></linearGradient></defs><path d="M898 736.2 H917 V757.5 H895.2 V739 Q895.2 736.2 898 736.2z" fill="url(#pptg)"/><path d="M916.5 736.2 V757 H895.2" fill="none" stroke="#b02a08" stroke-width="1"/><path d="M899 739.5 h6.5 q4.5 0 4.5 4.5 q0 4.5-4.5 4.5 h-2.5 v4.5 h-4z M903 742.3 v3.6 h2 q1.8 0 1.8-1.8 q0-1.8-1.8-1.8z" fill="#d84010" fill-rule="evenodd"/><path d="M897 752 q6-1 9 1 l10.5-5 l-1 9 h-18.5z" fill="#fff" opacity="0.95"/><ellipse cx="911" cy="750" rx="3.8" ry="3" fill="#f05a20"/><path d="M904 754.5 h5 M905 756 h4" stroke="#f0a080" stroke-width="0.8"/><path d="M947 736.2 H966 V757.5 H944.2 V739 Q944.2 736.2 947 736.2z" fill="url(#xlsg)"/><path d="M965.5 736.2 V757 H944.2" fill="none" stroke="#1a6a1a" stroke-width="1"/><path d="M947.5 740 h3.5 l3 5 l3-5 h3.5 l-4.8 6.5 l5 7 h-3.6 l-3.1-4.8 l-3.1 4.8 h-3.6 l5-7z" fill="#2a8a2a"/><path d="M947.5 740 h3.5 l8.5 13.5 h-3.6z" fill="#78c040"/><path d="M945.5 752 q6-1 9 1 l10.5-5 l-1 9 h-18.5z" fill="#fff" opacity="0.95"/><path d="M955 752.5 l8-3 M955.5 754.5 l8-3" stroke="#8ac88a" stroke-width="0.8"/><defs><radialGradient id="spg" cx="0.35" cy="0.3" r="0.75"><stop offset="0" stop-color="#b8daf4"/><stop offset="0.6" stop-color="#5a96d4"/><stop offset="1" stop-color="#2f68b0"/></radialGradient></defs><circle cx="1005" cy="747.9" r="12" fill="url(#spg)"/><path d="M997.5 741 H1007 V742.8 H1000.6 L1004.2 747 L1000.6 751.2 H1007 V753 H997.5 V751.6 L1001.8 747 L997.5 742.4 Z" fill="#eef4fb"/><path d="M1008 754 h5 M1010.5 751.8 v0.9 M1010.5 755.3 v0.9" stroke="#e0ecf8" stroke-width="1.1"/><defs><radialGradient id="sun" cx="0.4" cy="0.4" r="0.6"><stop offset="0" stop-color="#ffd040"/><stop offset="1" stop-color="#f08a10"/></radialGradient><linearGradient id="cld" x1="0" y1="0" x2="0" y2="1"><stop offset="0" stop-color="#f0f6fe"/><stop offset="1" stop-color="#a8c4ec"/></linearGradient></defs><circle cx="1097" cy="744.3" r="5.6" fill="url(#sun)"/><path d="M1082.5 759 Q1079 759 1079.5 755.5 Q1080 752 1083.5 752 Q1084 746 1090 745.8 Q1095 746 1096.5 750 Q1099 748.5 1101.5 750.5 Q1103 752 1102.5 753.5 Q1105 754.5 1104.5 757 Q1104 759 1101.5 759 Z" fill="url(#cld)" stroke="#dfe9f8" stroke-width="0.6"/><path d="M1159 751.5 L1165 745 L1171 751.5" fill="none" stroke="#fff" stroke-width="1.3"/><path d="M1184 755 a12 12 0 0 1 12-12 M1187.5 755 a8.5 8.5 0 0 1 8.5-8.5 M1191 755 a5 5 0 0 1 5-5" fill="none" stroke="#9aa4b0" stroke-width="1.1"/><circle cx="1194.5" cy="753.5" r="1.6" fill="#fff"/><path d="M1205.5 745 h2.8 l4-3.5 v12.3 l-4-3.5 h-2.8z" fill="none" stroke="#fff" stroke-width="1.1" stroke-linejoin="round"/><path d="M1214.3 745.3 q1.6 2.4 0 4.8 M1216.8 743.3 q3 4.4 0 8.8" fill="none" stroke="#fff" stroke-width="1.1"/><path d="M1219.4 741.5 q4.2 6.2 0 12.4" fill="none" stroke="#8a96a8" stroke-width="1"/><ellipse cx="1233.4" cy="743.6" rx="2.8" ry="1.7" fill="#fff"/><ellipse cx="1241.3" cy="743.6" rx="2.8" ry="1.7" fill="#fff"/><ellipse cx="1233.4" cy="748.4" rx="2.8" ry="1.7" fill="#fff"/><path d="M1236.2 743.6 h2.3 M1233.4 745.3 v1.4 M1233.4 750.1 v1.6" stroke="#b8c0cc" stroke-width="0.8" stroke-dasharray="0.8 0.6"/><circle cx="1240.6" cy="751.3" r="4.6" fill="#e81123"/><path d="M1238.6 749.3 l4 4 M1242.6 749.3 l-4 4" stroke="#fff" stroke-width="1.1"/><rect x="1325" y="740" width="16" height="13" fill="#fff"/><path d="M1328 743.8 h10 M1328 746.6 h10 M1328 749.4 h8" stroke="#1b2a4a" stroke-width="1"/><ellipse cx="1340.5" cy="755.6" rx="10" ry="8.5" fill="#2c2e34" stroke="#8a9098" stroke-width="0.8"/></svg>
<div style="position:absolute;left:1112px;top:741.33px;font-size:14px;line-height:normal;color:#e8eaee;font-weight:normal;white-space:pre;letter-spacing:-0.6px">26°C</div>
<div style="position:absolute;left:1257px;top:732.1px;font-size:12.6px;line-height:normal;color:#fff;font-weight:normal;white-space:pre;transform:scaleX(0.91);transform-origin:0 0;">12:40 PM</div>
<div style="position:absolute;left:1252.5px;top:750.1px;font-size:12.6px;line-height:normal;color:#fff;font-weight:normal;white-space:pre;transform:scaleX(0.95);transform-origin:0 0;">11/27/2022</div>
<div style="position:absolute;left:612px;top:747.73px;font-size:13px;line-height:normal;color:#fff;font-weight:normal;white-space:pre;transform:scaleX(0.95);transform-origin:0 0;">99</div>
<div style="position:absolute;left:625.5px;top:749.04px;font-size:11px;line-height:normal;color:#fff;font-weight:bold;white-space:pre;">+</div>
<div style="position:absolute;left:811.5px;top:749.0px;font-size:10.5px;line-height:normal;color:#e8f0ff;font-weight:normal;white-space:pre;">c</div>
<div style="position:absolute;left:860.2px;top:746.98px;font-size:13.5px;line-height:normal;color:#fff;font-weight:normal;white-space:pre;">2</div>
<div style="position:absolute;left:1333.5px;top:749.64px;font-size:12px;line-height:normal;color:#fff;font-weight:normal;white-space:pre;letter-spacing:-0.3px">35</div>
<div style="position:absolute;left:1007.5px;top:740.1500000000001px;font-size:10px;line-height:normal;color:#eef4fb;font-weight:bold;white-space:pre;">α</div>
<div style="position:absolute;left:1073.5px;top:650.58px;font-size:19.8px;line-height:normal;color:rgba(130,130,135,0.35);font-weight:normal;white-space:pre;">Activate Windows</div>
<div style="position:absolute;left:1073px;top:676.02px;font-size:15px;line-height:normal;color:rgba(120,120,125,0.5);font-weight:normal;white-space:pre;">Go to Settings to activate Windows.</div>
</body></html>
